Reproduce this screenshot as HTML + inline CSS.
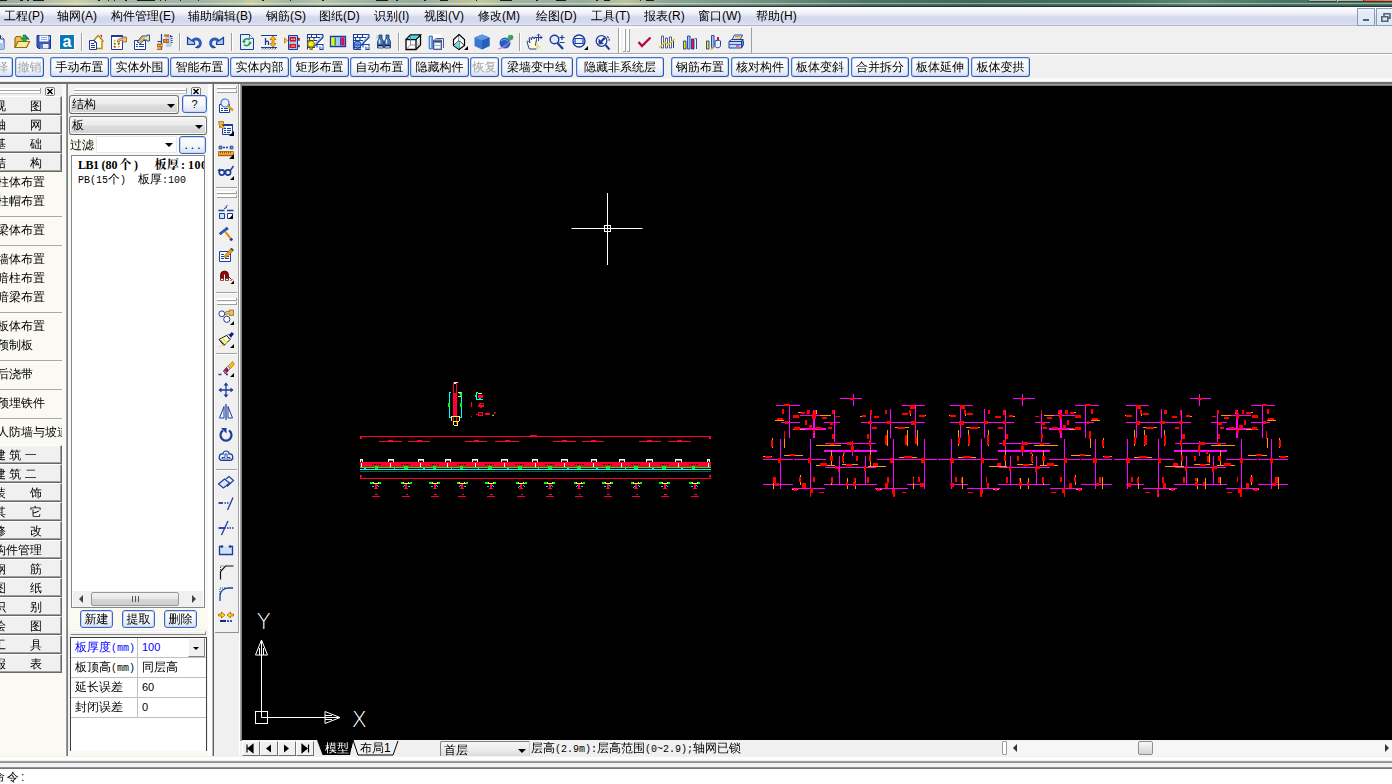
<!DOCTYPE html>
<html lang="zh-CN"><head><meta charset="utf-8"><title>CAD</title>
<style>
*{box-sizing:border-box;margin:0;padding:0}
html,body{width:1392px;height:784px;overflow:hidden;background:#f0f0f0}
body{position:relative;font-family:"Liberation Sans","WenQuanYi Zen Hei","Noto Sans CJK SC",sans-serif;font-size:12px;color:#000;line-height:1}
.a{position:absolute}
svg{position:absolute;overflow:visible}
#title{left:0;top:0;width:1392px;height:7px;background:linear-gradient(90deg,#9aa89c 0,#b0b8a8 3%,#cfd0a8 5.500%,#a8b8a4 8%,#a0b2a2 14%,#b4c0a4 17%,#c8cca0 18%,#a4b4a4 21%,#b4c4a8 23%,#9cb0a0 27%,#98ac9c 30%,#c4c89c 34.500%,#a0b4a0 37%,#98ac9c 42%,#bcc49c 45%,#8ca494 48%,#7c9888 52%,#6c8c7c 56%,#4c7466 62%,#3f695c 70%,#42705f 80%,#5c8874 86%,#4a7666 92%,#44705f 100%);border-bottom:1px solid #25352f}
#menubar{left:0;top:7px;width:1392px;height:19px;background:linear-gradient(180deg,#fdfdfe 0,#f3f4fa 30%,#e6e8f4 45%,#d6daee 55%,#d4d8ee 80%,#dfe2f2 100%);border-bottom:1px solid #b4bace}
#menubar span{position:absolute;top:3px;font-size:12px;white-space:nowrap;letter-spacing:0}
.xb{position:absolute;top:57px;height:20px;border:1px solid #3b68c0;border-color:#4674cc #2c58b4 #2c58b4 #4674cc;border-radius:3px;background:linear-gradient(180deg,#ffffff 0,#f6f8fc 50%,#e3e9f6 85%,#d3ddf2 100%);font-size:12px;line-height:18px;text-align:center;white-space:nowrap;overflow:hidden;box-shadow:inset 0 0 0 1px #c9d7f2}
.xb.dis{color:#a6a6a6}
.sep{position:absolute;width:2px;height:18px;top:33px;border-left:1px solid #a0a0a0;border-right:1px solid #fff}
#canvas{left:242px;top:86px;width:1150px;height:655px;background:#000}
.pb{position:absolute;left:-1px;width:63px;height:19px;background:#f0f0f0;border-top:1px solid #fff;border-left:1px solid #fff;border-right:1px solid #696969;border-bottom:1px solid #696969;box-shadow:inset -1px -1px 0 #a0a0a0;font-size:12px;line-height:15px;white-space:pre}
.pb span{position:absolute;top:2px}
.li{position:absolute;left:-3px;font-size:12px;white-space:nowrap}
.hs{position:absolute;left:0;width:62px;height:1px;background:#a8a8a8}
.n{font-size:11px}
.grip{position:absolute;height:6px}
.grip:before{content:"";position:absolute;left:0;right:0;top:0;height:2px;background:#fff;border-bottom:1px solid #a0a0a0;border-right:1px solid #a0a0a0}
.grip:after{content:"";position:absolute;left:0;right:0;top:3px;height:2px;background:#fff;border-bottom:1px solid #c8c8c8;border-right:1px solid #a0a0a0}
.cx{position:absolute;width:10px;height:9px;border:1px solid #808080;border-radius:2px;background:#fff}
.dd{position:absolute;height:19px;border:1px solid #787878;border-bottom-color:#606060;border-radius:3px;background:linear-gradient(180deg,#f4f4f4 0,#ececec 45%,#dcdcdc 55%,#d2d2d2 100%);font-size:12px;line-height:17px;padding-left:2px;box-shadow:inset 0 0 0 1px #fafafa}
.arr{position:absolute;width:0;height:0;border-left:4px solid transparent;border-right:4px solid transparent;border-top:4px solid #000}
.bb{position:absolute;border:1px solid #3b68c0;border-radius:3px;background:linear-gradient(180deg,#ffffff 0,#f4f7fc 50%,#dfe7f6 90%,#cfdaf0 100%);box-shadow:inset 0 0 0 1px #c9d7f2;font-size:12px;text-align:center;white-space:nowrap}
.m{font-family:'Liberation Mono',monospace;font-size:10px}
.vg{position:absolute;width:20px;height:3px;background:#fff;border-right:1px solid #a0a0a0;border-bottom:1px solid #a0a0a0}
.pg{position:absolute;font-size:12px;white-space:nowrap}
</style></head><body>
<div id="title" class="a"></div>
<div class="a" style="left:0;top:3px;width:1392px;height:1px;background:rgba(255,255,255,.45)"></div>
<div class="a" style="left:0;top:5px;width:1392px;height:1px;background:rgba(40,70,60,.35)"></div>
<div class="a" style="left:0px;top:0;width:7px;height:1px;background:#182018"></div>
<div class="a" style="left:20px;top:0;width:3px;height:1px;background:#182018"></div>
<div class="a" style="left:27px;top:0;width:2px;height:1px;background:#182018"></div>
<div class="a" style="left:33px;top:0;width:11px;height:1px;background:#182018"></div>
<div class="a" style="left:98px;top:0;width:2px;height:1px;background:#182018"></div>
<div class="a" style="left:108px;top:0;width:1px;height:1px;background:#182018"></div>
<div class="a" style="left:114px;top:0;width:1px;height:1px;background:#182018"></div>
<div class="a" style="left:125px;top:0;width:2px;height:1px;background:#182018"></div>
<div class="a" style="left:137px;top:0;width:18px;height:1px;background:#182018"></div>
<div class="a" style="left:160px;top:0;width:1px;height:1px;background:#182018"></div>
<div class="a" style="left:165px;top:0;width:1px;height:1px;background:#182018"></div>
<div class="a" style="left:180px;top:0;width:1px;height:1px;background:#182018"></div>
<div class="a" style="left:198px;top:0;width:1px;height:1px;background:#182018"></div>
<div class="a" style="left:262px;top:0;width:2px;height:1px;background:#182018"></div>
<div class="a" style="left:290px;top:0;width:1px;height:1px;background:#182018"></div>
<div class="a" style="left:322px;top:0;width:2px;height:1px;background:#182018"></div>
<div class="a" style="left:376px;top:0;width:12px;height:1px;background:#182018"></div>
<div class="a" style="left:396px;top:0;width:2px;height:1px;background:#182018"></div>
<div class="a" style="left:424px;top:0;width:2px;height:1px;background:#182018"></div>
<div class="a" style="left:440px;top:0;width:8px;height:1px;background:#182018"></div>
<div class="a" style="left:476px;top:0;width:1px;height:1px;background:#182018"></div>
<div class="a" style="left:500px;top:0;width:12px;height:1px;background:#182018"></div>
<div class="a" style="left:536px;top:0;width:2px;height:1px;background:#182018"></div>
<div class="a" style="left:556px;top:0;width:10px;height:1px;background:#182018"></div>
<div class="a" style="left:596px;top:0;width:2px;height:1px;background:#182018"></div>
<div class="a" style="left:604px;top:0;width:6px;height:1px;background:#182018"></div>
<div class="a" style="left:640px;top:0;width:1px;height:1px;background:#182018"></div>
<div class="a" style="left:646px;top:0;width:8px;height:1px;background:#182018"></div>
<div class="a" style="left:1308px;top:0;width:28px;height:2px;background:#a8bcb4;border-bottom:1px solid #30443c;border-left:1px solid #30443c;border-radius:0 0 0 4px"></div>
<div class="a" style="left:1337px;top:0;width:26px;height:2px;background:#a8bcb4;border-bottom:1px solid #30443c;border-left:1px solid #dfe8e4"></div>
<div class="a" style="left:1363px;top:0;width:29px;height:2px;background:linear-gradient(90deg,#c86848,#e08a60);border-bottom:1px solid #6a2818;border-left:1px solid #6a2818"></div>
<div id="menubar" class="a">
<span style="left:4px">工程(P)</span>
<span style="left:57px">轴网(A)</span>
<span style="left:111px">构件管理(E)</span>
<span style="left:188px">辅助编辑(B)</span>
<span style="left:266px">钢筋(S)</span>
<span style="left:319px">图纸(D)</span>
<span style="left:374px">识别(I)</span>
<span style="left:424px">视图(V)</span>
<span style="left:478px">修改(M)</span>
<span style="left:536px">绘图(D)</span>
<span style="left:591px">工具(T)</span>
<span style="left:644px">报表(R)</span>
<span style="left:698px">窗口(W)</span>
<span style="left:756px">帮助(H)</span>
<div class="a" style="left:1357px;top:1px;width:18px;height:18px;border:1px solid #8a9cb4;background:linear-gradient(180deg,#eef4fc 0,#e2ecf8 25%,#dce8f6 100%)"><div class="a" style="left:5px;top:10px;width:6px;height:2px;background:#566474"></div></div>
<div class="a" style="left:1376px;top:1px;width:18px;height:18px;border:1px solid #8a9cb4;background:linear-gradient(180deg,#eef4fc 0,#e2ecf8 25%,#dce8f6 100%)"><svg style="left:4px;top:4px" width="10" height="9" viewBox="0 0 10 9"><path d="M3 3V.8h6v4.500h-2" fill="none" stroke="#566474" stroke-width="1.600"/><path d="M.8 3.800h6v4.400h-6z" fill="none" stroke="#566474" stroke-width="1.600"/></svg></div>
</div>
<div class="a" style="left:0;top:26px;width:1392px;height:28px;background:#f0f0f0;border-bottom:1px solid #a8a8a8"></div>
<div class="a" style="left:0;top:54px;width:1392px;height:1px;background:#fff"></div>
<div class="sep" style="left:81px"></div>
<div class="sep" style="left:179px"></div>
<div class="sep" style="left:231px"></div>
<div class="sep" style="left:398px"></div>
<div class="sep" style="left:519px"></div>
<svg style="left:-10px;top:34px" width="16" height="16" viewBox="0 0 16 16"><path d="M3.500 1.500h7l3.500 3.500v10h-10.500z" fill="#eef4ff" stroke="#1c3c9c"/><path d="M10.500 1.500v3.500h3.500" fill="#fff" stroke="#1c3c9c"/><path d="M9 9h5v6h-5z" fill="#a8c8f0"/></svg>
<svg style="left:14px;top:34px" width="16" height="16" viewBox="0 0 16 16"><path d="M1 13.500v-9l1.500-2h4l1.500 2h4v2" fill="#e8c060" stroke="#a06808" stroke-width="1.200"/><path d="M1 13.500l3-6h11.500l-3 6z" fill="#f4eca0" stroke="#a06808" stroke-width="1.200"/><path d="M9 1h3v3.500h2l-3.500 3.500-3.500-3.500h2z" fill="#20b040" stroke="#107028" stroke-width=".6"/><path d="M12 2.500l3 3" stroke="#2050b0" stroke-width="1.200"/></svg>
<svg style="left:36px;top:34px" width="16" height="16" viewBox="0 0 16 16"><path d="M1 1.500h13.500v13h-12l-1.500-1.500z" fill="#3858b8" stroke="#1c3090" stroke-width="1"/><path d="M3.500 1.500h9v6h-9z" fill="#f4f8ff"/><path d="M5 3.500h6M5 5.500h6" stroke="#90b0e8"/><path d="M4 10h8.500v4.500h-8.500z" fill="#e8ecf4"/><path d="M4 10h3v4.500h-3z" fill="#5878c8"/><path d="M13.500 2.500v3" stroke="#c0d0f0"/></svg>
<svg style="left:59px;top:34px" width="16" height="16" viewBox="0 0 16 16"><rect x=".5" y=".5" width="15" height="15" fill="#0c80c0" stroke="#fff" stroke-width="1"/><rect x="1" y="1" width="14" height="14" fill="#0878b8"/><text x="8" y="13" text-anchor="middle" font-family="Liberation Sans,sans-serif" font-weight="bold" font-size="16" fill="#fff">a</text></svg>
<svg style="left:88px;top:34px" width="16" height="16" viewBox="0 0 16 16"><path d="M5 7.500l5-6 5.500 6M6.500 7v7.500h7.500v-7.500" fill="#fffbe8" stroke="#b08810" stroke-width="1.400"/><path d="M12 1h2v3z" fill="#d01050"/><path d="M1.500 6.500h5l2 2v7h-7z" fill="#fff" stroke="#1c3c9c"/><path d="M3 9.500h3M3 11.500h4M3 13.500h4" stroke="#1c3c9c"/><path d="M6.500 6.500v2h2" fill="none" stroke="#1c3c9c" stroke-width=".8"/></svg>
<svg style="left:111px;top:34px" width="16" height="16" viewBox="0 0 16 16"><path d="M.5 1.500h11v14h-11z" fill="#fff" stroke="#1c3c9c"/><path d="M.5 2h11" stroke="#1c3c9c" stroke-width="2"/><path d="M3 6l1.500 1.500" stroke="#e0c000" stroke-width="1.600"/><path d="M3 9l1.500 1.500" stroke="#10a020" stroke-width="1.600"/><path d="M3 12l1.500 1.500" stroke="#e01010" stroke-width="1.600"/><path d="M8.500 9l-1.500 1.500" stroke="#e01010" stroke-width="1.600"/><path d="M8.500 12l-1.500 1.500" stroke="#e0c000" stroke-width="1.600"/><path d="M7 6.500l1 1" stroke="#10a020" stroke-width="1.400"/><path d="M6.500 8c0-4 3-4 5-3.500v-1.500h4v5h-4v-1.500c-2-.5-3 0-3 1.500z" fill="#e8c080" stroke="#906020" stroke-width=".8"/></svg>
<svg style="left:134px;top:34px" width="16" height="16" viewBox="0 0 16 16"><path d="M.5 6.500h11v9h-11z" fill="#fff" stroke="#1c3c9c"/><path d="M2 10.500h2M5 10.500h5M2 12.500h2M5 12.500h5" stroke="#1c3c9c" stroke-width="1.200"/><path d="M3 8l5-6h5v-1h2.500v6h-2.500v-1h-3l-3 3.500z" fill="#f0e890" stroke="#1c3c9c" stroke-width=".9"/><path d="M4.500 7.500l4-4.500M6 8l4-4.500M7.500 8l3-3.500" stroke="#806010" stroke-width=".6"/></svg>
<svg style="left:157px;top:34px" width="16" height="16" viewBox="0 0 16 16"><path d="M4.500 0v16M4.500 7.500h-4M11 2v11M13.500 1v12" stroke="#1c3c9c" stroke-width="1.200" fill="none"/><path d="M8 3h6v10h-5z" fill="#b8d0f0"/><path d="M7 .500h5v2h-5z" fill="#c06810"/><path d="M6 5h6v4h-6z" fill="#c06810"/><path d="M0 9.500h5.500v4h-5.500z" fill="#c06810"/><path d="M0 14.500h5v1.500h-5z" fill="#c06810"/><path d="M7.500 6.500h1.500v1h-1.500zM10 6.500h1.500v1h-1.500zM1 11h1.500v1h-1.500zM3.500 11h1.500v1h-1.500z" fill="#ffe060"/><path d="M14 2.500h1.500M14 4.500h1.500M14 6.500h1.500M14 8.500h1.500" stroke="#1c3c9c"/></svg>
<svg style="left:186px;top:34px" width="16" height="16" viewBox="0 0 16 16"><path d="M6 9.500A4.200 4.200 0 1 1 11.200 13.300" fill="none" stroke="#2a5cc0" stroke-width="3"/><path d="M9.500 13.600l2.500-.800" stroke="#101850" stroke-width="1.200"/><path d="M1.500 3.500v7h7v-2.500l-3.500-2z" fill="#a8c8f0" stroke="#1c3c9c" stroke-width="1.200" stroke-linejoin="miter"/></svg>
<svg style="left:209px;top:34px" width="16" height="16" viewBox="0 0 16 16"><path d="M10 9.500A4.200 4.200 0 1 0 4.800 13.300" fill="none" stroke="#2a5cc0" stroke-width="3"/><path d="M6.500 13.600l-2.500-.800" stroke="#101850" stroke-width="1.200"/><path d="M14.500 3.500v7h-7v-2.500l3.500-2z" fill="#a8c8f0" stroke="#1c3c9c" stroke-width="1.200" stroke-linejoin="miter"/></svg>
<svg style="left:239px;top:34px" width="16" height="16" viewBox="0 0 16 16"><path d="M1.500 .500h9l4 4v11h-13z" fill="#e4eefc" stroke="#1c3c9c"/><path d="M10.500 .500v4h4" fill="#fff" stroke="#1c3c9c" stroke-width=".8"/><path d="M10.500 6a3.500 3.500 0 0 0-6 1.500" fill="none" stroke="#20a030" stroke-width="1.600"/><path d="M5 10.500a3.500 3.500 0 0 0 6-1.500" fill="none" stroke="#20a030" stroke-width="1.600"/><path d="M3 7h4l-2 2.500zM13 9.500h-4l2-2.500z" fill="#20a030"/></svg>
<svg style="left:261px;top:34px" width="16" height="16" viewBox="0 0 16 16"><path d="M0 1.500h16M0 13.500h16" stroke="#1c3c9c" stroke-width="1.200"/><path d="M1 15.500l1.500-1.500M3.500 15.500l1.500-1.500M6 15.500l1.500-1.500M8.500 15.500l1.500-1.500M11 15.500l1.500-1.500M13.500 15.500l1.500-1.500" stroke="#1c3c9c" stroke-width=".9"/><path d="M4.500 4v7M4.500 8c2-1.500 3-1 3 .500v2.500" fill="none" stroke="#1c3c9c" stroke-width="1.300"/><path d="M12 2l3 3.500h-2v4h2l-3 3.500-3-3.500h2v-4h-2z" fill="#f8c020" stroke="#b07000" stroke-width=".8"/></svg>
<svg style="left:284px;top:34px" width="16" height="16" viewBox="0 0 16 16"><path d="M4.500 1.500h9v14h-9z" fill="#a8c4f0" stroke="#1c3c9c"/><path d="M.500 4l3 2.500-3 2.500z" fill="#ffd860" stroke="#c08000" stroke-width=".9"/><path d="M5.500 3h6.500v4.500h-6.500zM5.500 10h6.500v4h-6.500z" fill="#d01030"/><path d="M7 4.500h1.500v1.500h-1.500zM9.500 4.500h1.500v1.500h-1.500zM7 11.500h4v1h-4z" fill="#ffe060"/><path d="M13.500 4h2v2.500h-2zM13.500 11h2v2h-2z" fill="#d01030" stroke="#1c3c9c" stroke-width=".5"/></svg>
<svg style="left:307px;top:34px" width="16" height="16" viewBox="0 0 16 16"><rect x=".5" y=".5" width="15" height="14.500" fill="#fff"/><path d="M16 0L7.500 9.500h3L16 4z" fill="#a8c8f0"/><path d="M10 9.500h6V5z" fill="#fff"/><path d="M.500 15.500V.500h15.500M.500 3.500h12.500M.500 6.500h9.500M.500 9.500h7M4.500 .500v3M9.500 .500v3M2.500 3.500v3M7 3.500v3M4.500 6.500v3M8.500 10.500h7.500v2M10 10.500v3M8 13.500h-7.500M13 12.500v3h3v-2.500M5 12v3.500M16 .500v3l-9 9" fill="none" stroke="#1c3c9c" stroke-width="1.100"/><path d="M13.500 13h2v2h-2z" fill="#a8c8f0"/><circle cx="4" cy="10" r="3.300" fill="#f8f010" stroke="#605000" stroke-width=".8"/><path d="M2.800 13h2.400v2.500h-2.400z" fill="#c8a000" stroke="#705000" stroke-width=".6"/><path d="M.500 5l1 1.500M4 3.500v2M7.500 5l-1 1.500" stroke="#ffe020" stroke-width=".9"/></svg>
<svg style="left:330px;top:34px" width="16" height="16" viewBox="0 0 16 16"><path d="M.500 2.500h15v10h-15z" fill="#a8c8f0" stroke="#1c3c9c" stroke-width="1.300"/><path d="M1.500 3.500h3v8h-3z" fill="#f8f000"/><path d="M4.500 3.500h1.500v8h-1.500z" fill="#30a830"/><path d="M6 3.500h4v8h-4z" fill="#a8c8f0"/><path d="M10 3.500h1.200v8h-1.200z" fill="#1848d0"/><path d="M11.200 3.500h3.300v8h-3.300z" fill="#d81048"/></svg>
<svg style="left:353px;top:34px" width="16" height="16" viewBox="0 0 16 16"><rect x=".5" y=".5" width="15" height="14.500" fill="#fff"/><path d="M16 0L7.500 9.500h3L16 4z" fill="#a8c8f0"/><path d="M10 9.500h6V5z" fill="#fff"/><path d="M.500 15.500V.500h15.500M.500 3.500h12.500M.500 6.500h9.500M.500 9.500h7M4.500 .500v3M9.500 .500v3M2.500 3.500v3M7 3.500v3M4.500 6.500v3M8.500 10.500h7.500v2M10 10.500v3M8 13.500h-7.500M13 12.500v3h3v-2.500M5 12v3.500M16 .500v3l-9 9" fill="none" stroke="#1c3c9c" stroke-width="1.100"/><path d="M13.500 13h2v2h-2z" fill="#a8c8f0"/><circle cx="4.500" cy="10.500" r="3.400" fill="#3a78d0" stroke="#1c3c9c" stroke-width=".8"/><path d="M2 9.500c1.500-1 3-1 5 0M2 12c1.500 1 3 1 5 0" stroke="#a8d0f8" stroke-width=".7" fill="none"/><path d="M1 14.500h7v1.500h-7z" fill="#1c3c9c"/></svg>
<svg style="left:376px;top:34px" width="16" height="16" viewBox="0 0 16 16"><path d="M0 1h3v4h-3z" fill="#c8e4c8"/><path d="M3 1h3v3.500l1.500 3v6.500h-6v-6.500l1.500-3z" fill="#4878b0" stroke="#1c3070" stroke-width=".8"/><path d="M10 1h3v3.500l1.500 3v6.500h-6v-6.500l1.500-3z" fill="#4878b0" stroke="#1c3070" stroke-width=".8"/><path d="M3.500 5.500v4M10.500 5.500v4" stroke="#d8ecfc" stroke-width="1.400"/><path d="M2 11.500h5M9 11.500h5" stroke="#102040" stroke-width="1.600"/><path d="M2.500 13h4M9.500 13h4" stroke="#e8f4ff" stroke-width="1"/><path d="M7.500 7.500h1" stroke="#1c3070" stroke-width="2"/></svg>
<svg style="left:405px;top:34px" width="16" height="16" viewBox="0 0 16 16"><path d="M1 5.500h10v10h-10zM1 5.500l4.500-4.500h10l-4.500 4.500M15.500 1v10l-4.500 4.500" fill="#fff" stroke="#000" stroke-width="1.300"/><path d="M2 5l3.800-3.500h8.500l-3.800 3.500z" fill="#40e0e8"/><path d="M1.500 15l4-4M5.500 1.500v9.500h9.500" stroke="#707070" stroke-width=".8" fill="none"/><path d="M11.500 10.500l3.500-3.500v3.500z" fill="#d0d0d0"/></svg>
<svg style="left:428px;top:34px" width="16" height="16" viewBox="0 0 16 16"><rect x="0" y="0" width="13" height="16" fill="#fff"/><path d="M1 2h3.500v13h-3.500z" fill="#68a0e0" stroke="#3870c0" stroke-width=".8"/><path d="M2.500 3v11" stroke="#c8e0f8"/><path d="M5.500 6h8v9.500h-8z" fill="#8890c8" stroke="#404890" stroke-width=".9"/><path d="M7.500 4.500h8v9.500" fill="none" stroke="#404890" stroke-width=".9"/><path d="M6.500 9h6v5.500h-6z" fill="#f0f4f8"/><path d="M6.500 11.500h6" stroke="#90c890"/><path d="M6 7.500h7.500" stroke="#404890" stroke-width="1.200"/></svg>
<svg style="left:452px;top:34px" width="16" height="16" viewBox="0 0 16 16"><path d="M7 .500l5.500 5v6l-5.500 4-5.500-4v-6z" fill="#fff" stroke="#000" stroke-width="1.200"/><path d="M7 .500v6l-5.500 5M7 6.500l5.500 5M7 6.500v9" fill="none" stroke="#000" stroke-width=".8"/><path d="M2 11.500l5 3.500v-8z" fill="#60e0e8"/><path d="M7 1.500l4.500 4.500-4.500 1z" fill="#d8f4f8"/><path d="M16 12v4h-4z" fill="#000"/></svg>
<svg style="left:474px;top:34px" width="16" height="16" viewBox="0 0 16 16"><path d="M8 .500l7.500 3v8.500l-7.500 3.500-7.500-3.500v-8.500z" fill="#3a78d0"/><path d="M8 .500l7.500 3-7.500 3-7.500-3z" fill="#5a98e8"/><path d="M8 6.500v9l7.500-3.500v-8.500z" fill="#2860b8"/></svg>
<svg style="left:498px;top:34px" width="16" height="16" viewBox="0 0 16 16"><circle cx="7" cy="9" r="5.500" fill="#2860c0"/><path d="M3 7c2-2 5-2 7 0" stroke="#5a98e8" stroke-width="1.500" fill="none"/><circle cx="12.500" cy="3.500" r="2.800" fill="#20c040"/><path d="M.500 15c4-1 10-5 14-13" fill="none" stroke="#9048b0" stroke-width="1.200"/><path d="M1 14.500c5-1 9-4 12-9" fill="none" stroke="#d8c8e8" stroke-width=".7"/></svg>
<svg style="left:526px;top:34px" width="16" height="16" viewBox="0 0 16 16"><path d="M1 7.500c1-1 2 0 3 1.500l-1-5c1-1 2 0 2.500 2l.500-3c1-.500 1.800 0 2 2l1-2c1 0 1.500 1 1.500 2.500l-1 5.500 1.500 2v2h-7.500l-1-2z" fill="#fffbe0" stroke="#1c3c9c" stroke-width="1"/><path d="M12.500 0v7M9 3.500h7M12.500 0l-1.500 1.500M12.500 0l1.500 1.500M16 3.500l-1.500-1.500M16 3.500l-1.500 1.500" stroke="#1c3c9c" stroke-width="1" fill="none"/><path d="M10 9l5 4-5 3z" fill="#e8e090"/></svg>
<svg style="left:549px;top:34px" width="16" height="16" viewBox="0 0 16 16"><circle cx="5.500" cy="5.500" r="4.300" fill="#e0ecfc" stroke="#1c3c9c" stroke-width="1.400"/><path d="M8.500 9l5.500 6" stroke="#1c3c9c" stroke-width="2.200"/><path d="M10.500 3.500h5M13 1v5M10.500 8.500h5" stroke="#1c3c9c" stroke-width="1.200"/></svg>
<svg style="left:572px;top:34px" width="16" height="16" viewBox="0 0 16 16"><circle cx="7" cy="7" r="6" fill="#fff" stroke="#1c3c9c" stroke-width="1.400"/><path d="M3 4.500h8v5h-8z" fill="#e0ecfc" stroke="#1c3c9c" stroke-width="1.200"/><path d="M3 9.500v-2M11 4.500v2" stroke="#fff" stroke-width="0"/><path d="M16 12v4h-4z" fill="#000"/></svg>
<svg style="left:595px;top:34px" width="16" height="16" viewBox="0 0 16 16"><circle cx="6.500" cy="7" r="5.300" fill="#fff" stroke="#1c3c9c" stroke-width="1.300"/><path d="M10.500 11l4 4.500" stroke="#1c3c9c" stroke-width="2"/><path d="M3.500 10.500v-6l2 2 3.500-3.500 1.500 2-3.500 3 2 2z" fill="#1c3c9c"/><path d="M12 2.500c2 1 2.500 3 2 5" fill="none" stroke="#1c3c9c" stroke-width="1.200" stroke-dasharray="2 1"/></svg>
<svg style="left:636px;top:34px" width="16" height="16" viewBox="0 0 16 16"><path d="M2.500 8l3.500 4 8.500-8.500" fill="none" stroke="#b80838" stroke-width="2.300" stroke-linejoin="miter"/></svg>
<svg style="left:659px;top:34px" width="16" height="16" viewBox="0 0 16 16"><path d="M2.500 2v12h2v-12zM6.500 4v10h2v-10zM10.500 3v11h2v-11z" fill="#fff" stroke="#283080" stroke-width=".8"/><path d="M14.500 5v9" stroke="#1c3c9c"/><path d="M0 14l6-6 3 3 6.500-6" fill="none" stroke="#e8d000" stroke-width="1.200"/></svg>
<svg style="left:682px;top:34px" width="16" height="16" viewBox="0 0 16 16"><path d="M1.500 7h2.500v8h-2.500z" fill="#f8e000" stroke="#1c3c9c" stroke-width=".9"/><path d="M5.500 2h2.500v13h-2.500z" fill="#a8c8f0" stroke="#1c3c9c" stroke-width=".9"/><path d="M9.500 5h2.500v10h-2.500z" fill="#e01030" stroke="#1c3c9c" stroke-width=".9"/><path d="M13 4.500h1.500v10.500" fill="none" stroke="#1c3c9c" stroke-width=".9"/></svg>
<svg style="left:705px;top:34px" width="16" height="16" viewBox="0 0 16 16"><path d="M1.500 7h2.500v8h-2.500z" fill="#f8e000" stroke="#1c3c9c" stroke-width=".9"/><path d="M6.500 1.500h2.500v12h-2.500z" fill="#a8c8f0" stroke="#1c3c9c" stroke-width=".9"/><path d="M12 3h2v4h-2z" fill="#e01030"/><path d="M10 7c0-1 5.500-1 5.500 0v4.500c0 3-5.500 3-5.500 0z" fill="#e8f0fc" stroke="#1c3c9c" stroke-width="1"/><path d="M9 13l-3 2.500" stroke="#e0a020" stroke-width="1.600"/></svg>
<svg style="left:728px;top:34px" width="16" height="16" viewBox="0 0 16 16"><path d="M4 6l2.500-5h8l-2.500 5z" fill="#fff" stroke="#1c3c9c" stroke-width="1"/><path d="M7 2.500h5.500M6.500 4h5.500" stroke="#d8a020" stroke-width="1"/><path d="M1 7.500l2.500-2h11.500l-1.500 2zM1 7.500h12.500v6.500h-12.500zM13.500 7.500l1.500-2v6l-1.500 2.500" fill="#c8daf4" stroke="#1c3c9c" stroke-width="1"/><path d="M1.500 10.500h11.500" stroke="#1c3c9c" stroke-width=".8"/><path d="M8 12h3.500" stroke="#e01060" stroke-width="1.200"/><path d="M14.500 6.500c1.500 1 1.500 4 0 5.500" fill="none" stroke="#1c3c9c"/></svg>
<div class="a" style="left:618px;top:28px;width:2px;height:25px;border-left:1px solid #a0a0a0;border-right:1px solid #fff"></div>
<div class="a" style="left:620px;top:27px;width:132px;height:26px;border-left:1px solid #fff;border-right:1px solid #a0a0a0;border-top:1px solid #fff"></div>
<div class="a" style="left:623px;top:29px;width:3px;height:23px;background:#fff;border-right:1px solid #a0a0a0;border-bottom:1px solid #a0a0a0"></div>
<div class="a" style="left:627px;top:29px;width:3px;height:23px;background:#fff;border-right:1px solid #a0a0a0;border-bottom:1px solid #a0a0a0"></div>
<div class="xb dis" style="left:-9px;width:22px">择</div>
<div class="xb dis" style="left:15px;width:29px">撤销</div>
<div class="xb" style="left:50px;width:59px">手动布置</div>
<div class="xb" style="left:110px;width:59px">实体外围</div>
<div class="xb" style="left:170px;width:59px">智能布置</div>
<div class="xb" style="left:230px;width:59px">实体内部</div>
<div class="xb" style="left:290px;width:59px">矩形布置</div>
<div class="xb" style="left:350px;width:59px">自动布置</div>
<div class="xb" style="left:410px;width:59px">隐藏构件</div>
<div class="xb dis" style="left:470px;width:29px">恢复</div>
<div class="xb" style="left:501px;width:72px">梁墙变中线</div>
<div class="xb" style="left:576px;width:88px">隐藏非系统层</div>
<div class="xb" style="left:671px;width:58px">钢筋布置</div>
<div class="xb" style="left:731px;width:58px">核对构件</div>
<div class="xb" style="left:791px;width:58px">板体变斜</div>
<div class="xb" style="left:851px;width:58px">合并拆分</div>
<div class="xb" style="left:911px;width:58px">板体延伸</div>
<div class="xb" style="left:971px;width:59px">板体变拱</div>
<div class="a" style="left:0;top:78px;width:1392px;height:4px;background:linear-gradient(180deg,#f4f4f4,#fff 60%,#e0e0e0)"></div>
<div class="a" style="left:0;top:82px;width:1392px;height:2px;background:#6e6e6e"></div>
<div id="canvas" class="a"></div>
<div class="a" style="left:0;top:84px;width:62px;height:672px;background:#f0f0f0;overflow:hidden">
<div class="grip" style="left:-2px;top:4px;width:43px"></div>
<div class="cx" style="left:45px;top:3px"><svg style="left:1px;top:1px" width="6" height="5" viewBox="0 0 6 5"><path d="M0.5 0 L5.5 5 M5.5 0 L0.5 5" stroke="#000" stroke-width="1.6"/></svg></div>
<div class="a" style="left:0;top:87px;width:62px;height:274px;background:#fbfaf2"></div>
<div class="a" style="left:0;top:587px;width:62px;height:90px;background:#fbfaf2"></div>
<div class="pb" style="top:12px"><span style="left:-6px">视</span><span style="left:30px">图</span></div>
<div class="pb" style="top:31px"><span style="left:-6px">轴</span><span style="left:30px">网</span></div>
<div class="pb" style="top:50px"><span style="left:-6px">基</span><span style="left:30px">础</span></div>
<div class="pb" style="top:69px"><span style="left:-6px">结</span><span style="left:30px">构</span></div>
<div class="li" style="top:92px">柱体布置</div>
<div class="li" style="top:111px">柱帽布置</div>
<div class="li" style="top:140px">梁体布置</div>
<div class="li" style="top:169px">墙体布置</div>
<div class="li" style="top:188px">暗柱布置</div>
<div class="li" style="top:207px">暗梁布置</div>
<div class="li" style="top:236px">板体布置</div>
<div class="li" style="top:255px">预制板</div>
<div class="li" style="top:284px">后浇带</div>
<div class="li" style="top:313px">预埋铁件</div>
<div class="li" style="top:342px">人防墙与坡道</div>
<div class="hs" style="top:132px"></div>
<div class="hs" style="top:161px"></div>
<div class="hs" style="top:228px"></div>
<div class="hs" style="top:276px"></div>
<div class="hs" style="top:305px"></div>
<div class="hs" style="top:334px"></div>
<div class="pb" style="top:361px"><span style="left:-6px">建 筑 一</span></div>
<div class="pb" style="top:380px"><span style="left:-6px">建 筑 二</span></div>
<div class="pb" style="top:399px"><span style="left:-6px">装</span><span style="left:30px">饰</span></div>
<div class="pb" style="top:418px"><span style="left:-6px">其</span><span style="left:30px">它</span></div>
<div class="pb" style="top:437px"><span style="left:-6px">修</span><span style="left:30px">改</span></div>
<div class="pb" style="top:456px"><span style="left:-6px">构件管理</span></div>
<div class="pb" style="top:475px"><span style="left:-6px">钢</span><span style="left:30px">筋</span></div>
<div class="pb" style="top:494px"><span style="left:-6px">图</span><span style="left:30px">纸</span></div>
<div class="pb" style="top:513px"><span style="left:-6px">识</span><span style="left:30px">别</span></div>
<div class="pb" style="top:532px"><span style="left:-6px">绘</span><span style="left:30px">图</span></div>
<div class="pb" style="top:551px"><span style="left:-6px">工</span><span style="left:30px">具</span></div>
<div class="pb" style="top:570px"><span style="left:-6px">报</span><span style="left:30px">表</span></div>
</div>
<div class="a" style="left:62px;top:84px;width:6px;height:672px;background:#fafafa"><div class="a" style="left:4px;top:0;width:2px;height:672px;background:linear-gradient(90deg,#b0b0b0 0,#808080 50%)"></div></div>
<div class="a" style="left:68px;top:84px;width:144px;height:672px;background:#f0f0f0;overflow:hidden">
<div class="grip" style="left:6px;top:4px;width:113px"></div>
<div class="cx" style="left:123px;top:3px"><svg style="left:1px;top:1px" width="6" height="5" viewBox="0 0 6 5"><path d="M0.5 0 L5.5 5 M5.5 0 L0.5 5" stroke="#000" stroke-width="1.6"/></svg></div>
<div class="dd" style="left:1px;top:11px;width:110px">结构<div class="arr" style="left:97px;top:8px"></div></div>
<div class="bb" style="left:114px;top:11px;width:25px;height:18px;line-height:16px;font-size:11px">?</div>
<div class="dd" style="left:1px;top:32px;width:138px">板<div class="arr" style="left:125px;top:8px"></div></div>
<div class="a" style="left:0;top:51px;width:142px;height:20px;background:#fbfaf2"></div>
<div class="a" style="left:2px;top:55px;font-size:12px">过滤</div>
<div class="a" style="left:28px;top:52px;width:81px;height:17px;background:#fff;border:1px solid #e4e8f4"><div class="arr" style="left:68px;top:6px"></div></div>
<div class="bb" style="left:111px;top:52px;width:27px;height:18px;line-height:16px;letter-spacing:3px;padding-left:3px">...</div>
<div class="a" style="left:0;top:71px;width:142px;height:475px;background:#fbfaf2"></div>
<div class="a" style="left:3px;top:71px;width:134px;height:453px;background:#fff;border:1px solid #828790;overflow:hidden">
<div class="a" style="left:0;top:3px;width:140px;height:14px;font-family:'Liberation Serif','Noto Serif CJK SC',serif;font-weight:bold;font-size:12px;white-space:pre"><span class="a" style="left:6px;letter-spacing:-.5px">LB1</span><span class="a" style="left:29.500px">(80</span><span class="a" style="left:47.500px">个</span><span class="a" style="left:62px">)</span><span class="a" style="left:82.500px;letter-spacing:.5px">板厚</span><span class="a" style="left:109px">:</span><span class="a" style="left:116px;letter-spacing:.5px">100</span></div>
<div class="a" style="left:6px;top:17px;font-size:12px;white-space:pre"><span class="m">PB(15</span>个<span class="m">)  </span>板厚<span class="m">:100</span></div>
<div class="a" style="left:1px;top:435px;width:130px;height:16px;background:#f0f0f0"></div>
<svg style="left:6px;top:439px" width="6" height="8"><path d="M5 0 L1 4 L5 8Z" fill="#444"/></svg>
<svg style="left:119px;top:439px" width="6" height="8"><path d="M1 0 L5 4 L1 8Z" fill="#444"/></svg>
<div class="a" style="left:19px;top:436px;width:88px;height:14px;border:1px solid #979797;border-radius:2px;background:linear-gradient(180deg,#f2f2f2 0,#e8e8e8 45%,#d4d4d4 55%,#cfcfcf 100%)"><div class="a" style="left:40px;top:3px;width:7px;height:6px;border-left:1px solid #555;border-right:1px solid #555"><div class="a" style="left:2px;top:0;width:1px;height:6px;background:#555"></div></div></div>
</div>
<div class="bb" style="left:12px;top:526px;width:33px;height:18px;line-height:16px">新建</div>
<div class="bb" style="left:54px;top:526px;width:33px;height:18px;line-height:16px">提取</div>
<div class="bb" style="left:96px;top:526px;width:33px;height:18px;line-height:16px">删除</div>
<div class="a" style="left:2px;top:547px;width:136px;height:4px;border-top:1px solid #fff;border-left:1px solid #fff;border-right:1px solid #888;border-bottom:1px solid #888;background:#f0f0f0"></div>
<div class="a" style="left:2px;top:553px;width:137px;height:114px;background:#fff;border:1px solid #404040;border-bottom:none;overflow:hidden">
<div class="pg" style="left:4px;top:3px;color:#0000ff">板厚度<span class="m">(mm)</span></div>
<div class="pg" style="left:71px;top:3px;color:#0000ff"><span class="n">100</span></div>
<div class="a" style="left:0;top:19px;width:135px;height:1px;background:#c0c0c0"></div>
<div class="pg" style="left:4px;top:23px;color:#000">板顶高<span class="m">(mm)</span></div>
<div class="pg" style="left:71px;top:23px;color:#000">同层高</div>
<div class="a" style="left:0;top:39px;width:135px;height:1px;background:#c0c0c0"></div>
<div class="pg" style="left:4px;top:43px;color:#000">延长误差</div>
<div class="pg" style="left:71px;top:43px;color:#000"><span class="n">60</span></div>
<div class="a" style="left:0;top:59px;width:135px;height:1px;background:#c0c0c0"></div>
<div class="pg" style="left:4px;top:63px;color:#000">封闭误差</div>
<div class="pg" style="left:71px;top:63px;color:#000"><span class="n">0</span></div>
<div class="a" style="left:0;top:79px;width:135px;height:1px;background:#c0c0c0"></div>
<div class="a" style="left:66px;top:0;width:1px;height:80px;background:#c0c0c0"></div>
<div class="a" style="left:117px;top:0;width:17px;height:19px;background:#f0f0f0;border-top:1px solid #fff;border-left:1px solid #fff;border-right:1px solid #808080;border-bottom:1px solid #808080"><div class="arr" style="left:4px;top:8px;border-left-width:3px;border-right-width:3px;border-top-width:3px"></div></div>
</div>
<div class="a" style="left:0;top:667px;width:144px;height:5px;background:#fbfaf2"></div>
</div>
<div class="a" style="left:208px;top:84px;width:34px;height:672px;background:#f0f0f0"></div>
<div class="a" style="left:208px;top:84px;width:4px;height:672px;background:#fff"></div>
<div class="a" style="left:212px;top:84px;width:2px;height:672px;background:linear-gradient(90deg,#b8b8b8 0,#b8b8b8 50%,#606060 50%)"></div>
<div class="a" style="left:214px;top:84px;width:1px;height:672px;background:#fff"></div>
<div class="a" style="left:238px;top:84px;width:1px;height:549px;background:#a0a0a0"></div>
<div class="a" style="left:239px;top:84px;width:1px;height:672px;background:#fff"></div>
<div class="a" style="left:240px;top:84px;width:1152px;height:2px;background:linear-gradient(180deg,#a8a8a8,#707070)"></div>
<div class="a" style="left:240px;top:84px;width:2px;height:657px;background:linear-gradient(90deg,#b8b8b8,#707070)"></div>
<div class="vg" style="left:217px;top:86px"></div><div class="vg" style="left:217px;top:90px"></div>
<svg style="left:218px;top:98px" width="16" height="16" viewBox="0 0 16 16"><path d="M1.5 6.5h10v8h-10z" fill="#fff" stroke="#1c3c9c"/><path d="M3 10.5h2M6 10.5h4M3 12.5h2M6 12.5h4" stroke="#1c3c9c" stroke-width="1"/><circle cx="7" cy="5" r="4" fill="#e8f0fc" stroke="#4a6cd0" stroke-width="1.2"/><path d="M10 8l5 4.5" stroke="#d8a020" stroke-width="2.4"/></svg>
<svg style="left:218px;top:120px" width="16" height="16" viewBox="0 0 16 16"><path d="M4.5 4.5h10v10h-10z" fill="#f4f8ff" stroke="#1c3c9c"/><path d="M4.5 5h10" stroke="#1c3c9c" stroke-width="2"/><path d="M6 8.5h2M9 8.5h4M6 10.5h2M9 10.5h4M6 12.5h2M9 12.5h3" stroke="#1c3c9c"/><path d="M0.5 1.5h5v3h-2l3 3-1.5 1.5-3-3v2z" fill="#f0c040" stroke="#a07010" stroke-width=".8"/><path d="M16 11v5h-5z" fill="#000"/></svg>
<svg style="left:218px;top:143px" width="16" height="16" viewBox="0 0 16 16"><path d="M1 3h3v3h-3zM12 3h3v3h-3z" fill="#4a8ad0" stroke="#1c3c9c" stroke-width=".6"/><path d="M5 4.5h2M8 4.5h2" stroke="#1c3c9c" stroke-width="1.4"/><path d="M0.5 8.5h15v4h-15z" fill="#f0c030" stroke="#b06010" stroke-width=".8"/><path d="M2.5 8.5v2M4.5 8.5v2M6.5 8.5v2M8.5 8.5v2M10.5 8.5v2M12.5 8.5v2" stroke="#703000" stroke-width=".8"/><path d="M0 12.5h16" stroke="#c05010" stroke-width="1.4"/><path d="M16 11v5h-5z" fill="#000"/></svg>
<svg style="left:218px;top:164px" width="16" height="16" viewBox="0 0 16 16"><circle cx="3.8" cy="8.5" r="2.6" fill="none" stroke="#1c3c9c" stroke-width="1.6"/><circle cx="10" cy="8.5" r="2.6" fill="none" stroke="#1c3c9c" stroke-width="1.6"/><path d="M6 8h2M0 7l2-2M12 7l3.5-5" stroke="#1c3c9c" stroke-width="1.4" fill="none"/><path d="M16 12v4h-4z" fill="#000"/></svg>
<div class="a" style="left:216px;top:187px;width:21px;height:2px;border-top:1px solid #a0a0a0;border-bottom:1px solid #fff"></div>
<div class="vg" style="left:217px;top:191px"></div><div class="vg" style="left:217px;top:195px"></div>
<svg style="left:218px;top:205px" width="16" height="16" viewBox="0 0 16 16"><path d="M0.5 5.5h6M9 5.5h6.5" stroke="#1c3c9c" stroke-width="1.4"/><path d="M7.5 2l2-2M6 3.5l3-1" stroke="#1c3c9c"/><path d="M1.5 8.5h5v5h-5z" fill="#cfe0f8" stroke="#1c3c9c"/><path d="M9.5 8.5h5v5h-5z" fill="#fff" stroke="#1c3c9c"/><path d="M15 9.500v4.5h-4.500z" fill="#000"/></svg>
<svg style="left:218px;top:226px" width="16" height="16" viewBox="0 0 16 16"><path d="M7 5.500l6 7.500" stroke="#f0b020" stroke-width="2.200"/><path d="M8 6.500l4 5" stroke="#e04010" stroke-width=".8"/><path d="M12.500 12.500l1.500 2" stroke="#1c3c9c" stroke-width="2.800"/><path d="M1.800 8l8-6.200" stroke="#2a58b8" stroke-width="2.800"/><path d="M1.500 7l1.500 2M8.500 1.500l1.500 2" stroke="#1c3c9c" stroke-width="1"/></svg>
<svg style="left:218px;top:247px" width="16" height="16" viewBox="0 0 16 16"><path d="M1.500 4.500h11v10h-11z" fill="#fff" stroke="#1c3c9c"/><path d="M3 7.500h3M3 9.500h3M3 11.500h3M7 9.500h4M7 11.500h4" stroke="#1c3c9c"/><path d="M7 8l6.500-7 2 2-6.500 7-2.500.5z" fill="#f0a020" stroke="#905010" stroke-width=".7"/><path d="M13 1.500l2 2" stroke="#1c3c9c" stroke-width="1.600"/></svg>
<svg style="left:218px;top:268px" width="16" height="16" viewBox="0 0 16 16"><path d="M2.500 12v-5a4 4 0 0 1 8 0v5h-3v-5a1 1 0 0 0-2 0v5z" fill="#900808" stroke="#500000" stroke-width=".8"/><path d="M2.500 10.500h3v2h-3zM7.500 10.500h3v2h-3z" fill="#fff" stroke="#600808" stroke-width=".6"/><path d="M11 9l2.500 2.500M12.500 13l2-2" stroke="#b01818" stroke-width="1"/><path d="M16 12.500v3.500h-3.500z" fill="#000"/></svg>
<div class="a" style="left:216px;top:292px;width:21px;height:2px;border-top:1px solid #a0a0a0;border-bottom:1px solid #fff"></div>
<div class="vg" style="left:217px;top:298px"></div><div class="vg" style="left:217px;top:302px"></div>
<svg style="left:218px;top:309px" width="16" height="16" viewBox="0 0 16 16"><path d="M6.500 4.500c1-2.500 3-2.500 5-2v-1.500h4v5.500h-4v-1.500c-2-.500-3 0-3.500 1z" fill="#e8c060" stroke="#906818" stroke-width=".8"/><circle cx="3.800" cy="4.800" r="2.900" fill="#fff" stroke="#2a3c9c" stroke-width="1"/><circle cx="8.800" cy="10.300" r="3.100" fill="#fff" stroke="#2a3c9c" stroke-width="1"/><path d="M16 12v4h-4z" fill="#000"/></svg>
<svg style="left:218px;top:332px" width="16" height="16" viewBox="0 0 16 16"><path d="M10.500 3.500L14 .500l1.500 1.500-3 3.500z" fill="#101870" stroke="#101870" stroke-width=".8"/><path d="M8.500 3.500l2-1 2.500 3-1.500 1.500z" fill="#fff" stroke="#203070" stroke-width=".7"/><path d="M1 7.500l7.500-4 3.500 4-6 6z" fill="#fff" stroke="#101010" stroke-width="1"/><path d="M5.500 5.500l4 5-1.500 1.500-4.500-5.500z" fill="#f8f020"/><path d="M2.500 8l4 4.500" stroke="#101010" stroke-width=".7"/><path d="M0 14.500h1M2 14.500h1M4 14l1.500-1" stroke="#f0e800" stroke-width="1.200"/><path d="M16 12v4h-4z" fill="#000"/></svg>
<div class="a" style="left:216px;top:353px;width:21px;height:2px;border-top:1px solid #a0a0a0;border-bottom:1px solid #fff"></div>
<svg style="left:218px;top:361px" width="16" height="16" viewBox="0 0 16 16"><path d="M10 5L14.500 .500l1.500 1.500v2L12 8z" fill="#f8b818" stroke="#a86810" stroke-width=".6"/><path d="M8.500 6.500L10 5l2 3-1.500 1.500z" fill="#f4f4f4" stroke="#304080" stroke-width=".5"/><path d="M5.500 10l3-3.500 2 3-3 3.500z" fill="#d00828" stroke="#283888" stroke-width=".9"/><path d="M6.500 10.500l1.500 1" stroke="#fff" stroke-width=".8"/><path d="M.500 13.500h3M8 13.500h2" stroke="#1c3c9c" stroke-width="1.400"/><path d="M16 12v4h-4z" fill="#000"/></svg>
<svg style="left:218px;top:382px" width="16" height="16" viewBox="0 0 16 16"><path d="M8 1.500v13M1.500 8h13" stroke="#1c3c9c" stroke-width="1.300"/><path d="M8 .500l2.500 3h-5zM8 15.500l2.500-3h-5zM.500 8l3-2.500v5zM15.500 8l-3-2.500v5z" fill="#1c3c9c"/></svg>
<svg style="left:218px;top:404px" width="16" height="16" viewBox="0 0 16 16"><path d="M8 0v16" stroke="#1c3c9c" stroke-width="1.200"/><path d="M6 2.500v11.500h-4.500z" fill="#f4f8ff" stroke="#1c3c9c" stroke-width="1"/><path d="M10 2.500v11.500h4.500z" fill="#f4f8ff" stroke="#1c3c9c" stroke-width="1"/></svg>
<svg style="left:218px;top:427px" width="16" height="16" viewBox="0 0 16 16"><path d="M5 3.500a5.500 5.500 0 1 0 6 0" fill="none" stroke="#1c3c9c" stroke-width="2.200"/><path d="M3 1h5.500v5.500z" fill="#1c3c9c"/></svg>
<svg style="left:218px;top:448px" width="16" height="16" viewBox="0 0 16 16"><path d="M5 6a3 3 0 0 1 6 0a3.200 3.200 0 0 1 1 6.500h-8a3.200 3.200 0 0 1 1-6.500z" fill="#e8f0fc" stroke="#1c3c9c" stroke-width="1.200"/><path d="M7 6v3.500h-3v1.500h8v-1.500h-3v-3.500z" fill="#fff" stroke="#1c3c9c" stroke-width=".9"/></svg>
<div class="a" style="left:216px;top:469px;width:21px;height:2px;border-top:1px solid #a0a0a0;border-bottom:1px solid #fff"></div>
<svg style="left:218px;top:476px" width="16" height="16" viewBox="0 0 16 16"><path d="M0.500 8l6-5 5 4-6 5z" fill="#dce8fa" stroke="#1c3c9c" stroke-width="1.200"/><path d="M8 3l3-2.500 4.500 4-6.500 6" fill="none" stroke="#1c3c9c" stroke-width="1.200"/></svg>
<svg style="left:218px;top:497px" width="16" height="16" viewBox="0 0 16 16"><path d="M0.500 6h4.500" stroke="#1c3c9c" stroke-width="1.800"/><path d="M6.500 6h1.500M9 6h1.500" stroke="#1c3c9c" stroke-width="1.400"/><path d="M15 0.500L9.500 13" stroke="#1c3c9c" stroke-width="1.300"/></svg>
<svg style="left:218px;top:520px" width="16" height="16" viewBox="0 0 16 16"><path d="M0.500 8h7" stroke="#1c3c9c" stroke-width="1.800"/><path d="M9 8h1.500M11.500 8h1.500M14 8h1.500" stroke="#1c3c9c" stroke-width="1.400"/><path d="M10 1L3.500 15" stroke="#1c3c9c" stroke-width="1.300"/></svg>
<svg style="left:218px;top:542px" width="16" height="16" viewBox="0 0 16 16"><path d="M4 4.500h-2.500v8h13v-8h-2.500" fill="#cfe0f8" stroke="#1c3c9c" stroke-width="1.300"/><circle cx="4" cy="4.500" r="1.300" fill="#1c3c9c"/><circle cx="12" cy="4.500" r="1.300" fill="#1c3c9c"/></svg>
<svg style="left:218px;top:564px" width="16" height="16" viewBox="0 0 16 16"><path d="M2.500 15.500v-8l5-5.500h8" fill="none" stroke="#101010" stroke-width="1.200"/><path d="M2.500 6v-4h4" fill="none" stroke="#404040" stroke-width="1" stroke-dasharray="1 1"/></svg>
<svg style="left:218px;top:586px" width="16" height="16" viewBox="0 0 16 16"><path d="M2 15v-5a8 8 0 0 1 8-8h5" fill="none" stroke="#1c3c9c" stroke-width="1.300"/><path d="M2 8v-6h6" fill="none" stroke="#1c3c9c" stroke-width="1" stroke-dasharray="1 1"/></svg>
<svg style="left:218px;top:609px" width="16" height="16" viewBox="0 0 16 16"><path d="M.500 5h3v-2l3.500 3-3.500 3v-2h-3z" fill="#f8e010" stroke="#b06000" stroke-width=".8"/><path d="M15.500 5h-3v-2l-3.500 3 3.500 3v-2h3z" fill="#f8e010" stroke="#b06000" stroke-width=".8"/><path d="M2 12h6" stroke="#102878" stroke-width="2"/><path d="M9 12h2M12 12h2" stroke="#2a58d0" stroke-width="2"/></svg>
<div class="a" style="left:215px;top:632px;width:24px;height:1px;background:#909090"></div>
<div class="a" style="left:214px;top:633px;width:1px;height:123px;background:#f0f0f0"></div>
<svg style="left:0;top:0" width="1392" height="784" viewBox="0 0 1392 784"><path d="M571.5 228.500h71M607.500 193v72" stroke="#fff" stroke-width="1" fill="none"/><rect x="604.500" y="225.500" width="6" height="6" fill="none" stroke="#fff"/>
<g stroke="#fff" stroke-width="1" fill="none"><rect x="255.500" y="711.500" width="12" height="12"/><path d="M261.500 717.500V655M261.500 717.500H325"/><path d="M261.500 640l-6 15h12zM261.500 640v15M259.500 648v7M263.500 648v7"/><path d="M340 717.500l-15-6v12zM340 717.500h-15M332 715.500h-7M332 719.500h-7"/></g>
<text x="263.700" y="628.500" text-anchor="middle" fill="#fff" font-family="DejaVu Sans Light,DejaVu Sans,sans-serif" font-weight="200" font-size="22">Y</text>
<text x="359.400" y="727" text-anchor="middle" fill="#fff" font-family="DejaVu Sans Light,DejaVu Sans,sans-serif" font-weight="200" font-size="22">X</text>
<g shape-rendering="crispEdges"><rect x="453" y="393" width="4" height="23" fill="#ff0033"/><path d="M453.500 382v11M456.500 382v11M453.500 416v8M456.500 416v8" stroke="#ff0033" stroke-width="1" fill="none"/><path d="M451 392.500h-1.500v25h1.500M460 392.500h1.500v25h-1.500" stroke="#00ffff" fill="none" stroke-width="1"/><path d="M454 381.500l1 2 1-1.500h2" stroke="#fff" fill="none" stroke-width=".9"/><path d="M457.500 392.500h2.500v4h-2.500M451.500 416.500h8M452.500 421.500h6M453.500 421.500v3.500M457.500 421.500v3.500" stroke="#ffff00" fill="none" stroke-width="1"/><path d="M451.500 416v5M459.500 416v5M454 425.500h4" stroke="#fff" fill="none" stroke-width=".9"/><path d="M460 393l1 3" stroke="#00ff00" stroke-width="1.500"/><path d="M448.800 402.500v4.500M460.800 402.500v4.500" stroke="#00ff00" stroke-width="1.800"/><rect x="478" y="394.500" width="5" height="3.500" fill="#ff0033"/><path d="M478 392.500h-1.500v6.500h6" stroke="#00ffff" fill="none" stroke-width="1"/><path d="M478 393.500h4" stroke="#ffff00"/><path d="M475.500 394.500v2.500M479 398.500h2" stroke="#00ff00" stroke-width="1.400"/><path d="M479 403.500h4.500v3h-2l-.5 1-.5-1h-2z" fill="#ff0033" stroke="#ff0033" stroke-width=".8"/><rect x="481" y="404" width="1.500" height="1.200" fill="#000"/><path d="M470.500 402.500h1v4.500" stroke="#ff0033" stroke-width="1.300" fill="none"/><rect x="478.500" y="412.500" width="4" height="3" fill="none" stroke="#ff0033" stroke-width="1.400"/><path d="M476 414.500h2M485 414h5" stroke="#ff0033" stroke-width="1.600"/><rect x="470.500" y="415.500" width="1.200" height="1.200" fill="#ff0033"/><path d="M493 415.500l2.500-3.500" stroke="#ff0033" stroke-width="1.300"/><path d="M493 414.500v1.500" stroke="#00ff00" stroke-width="1.300"/><path d="M360.500 438.500v-2h350v2M360.500 476.500v1.500h350v-1.500" stroke="#ff0033" fill="none" stroke-width="1"/><path d="M530 436h7M530 478.500h7M360 438h2M709 438h2M360 476h2M709 476h2" stroke="#ff0033" stroke-width="1.600"/><path d="M378.8 441.500H401.8" stroke="#ff0033" stroke-width="1"/><path d="M387.8 440.500h5" stroke="#ff0033" stroke-width="1.500"/><path d="M408.1 441.500H429.9" stroke="#ff0033" stroke-width="1"/><path d="M416.5 440.500h5" stroke="#ff0033" stroke-width="1.500"/><path d="M465.0 441.500H487.1" stroke="#ff0033" stroke-width="1"/><path d="M473.6 440.500h5" stroke="#ff0033" stroke-width="1.500"/><path d="M495.2 441.500H518.7" stroke="#ff0033" stroke-width="1"/><path d="M504.5 440.500h5" stroke="#ff0033" stroke-width="1.500"/><path d="M553.2 441.500H576.2" stroke="#ff0033" stroke-width="1"/><path d="M562.2 440.500h5" stroke="#ff0033" stroke-width="1.500"/><path d="M582.2 441.500H603.8" stroke="#ff0033" stroke-width="1"/><path d="M590.5 440.500h5" stroke="#ff0033" stroke-width="1.500"/><path d="M638.9 441.500H661.0" stroke="#ff0033" stroke-width="1"/><path d="M647.4 440.500h5" stroke="#ff0033" stroke-width="1.500"/><path d="M667.6 441.500H691.1" stroke="#ff0033" stroke-width="1"/><path d="M676.9 440.500h5" stroke="#ff0033" stroke-width="1.500"/><rect x="360" y="461.500" width="351" height="5" fill="#ff0033"/><path d="M360 467.500h351" stroke="#00ff00" stroke-width="1.200"/><path d="M360 469.500h351" stroke="#00ffff" stroke-width="1.400"/><path d="M360 471h351" stroke="#00a0a0" stroke-width=".6"/><path d="M360.6 462v-2.500h2.0v2.500" stroke="#fff" fill="none" stroke-width="1"/><path d="M361.6 463v4" stroke="#fff" stroke-width="1"/><path d="M360.6 460.500h2.0" stroke="#ffff80" stroke-width=".6"/><path d="M388.1 462v-2.500h5.5v2.500" stroke="#fff" fill="none" stroke-width="1"/><path d="M390.9 463v4" stroke="#fff" stroke-width="1"/><path d="M388.1 460.500h5.5" stroke="#ffff80" stroke-width=".6"/><path d="M418.0 462v-2.500h5.5v2.500" stroke="#fff" fill="none" stroke-width="1"/><path d="M420.7 463v4" stroke="#fff" stroke-width="1"/><path d="M418.0 460.500h5.5" stroke="#ffff80" stroke-width=".6"/><path d="M445.0 462v-2.500h5.5v2.500" stroke="#fff" fill="none" stroke-width="1"/><path d="M447.8 463v4" stroke="#fff" stroke-width="1"/><path d="M445.0 460.500h5.5" stroke="#ffff80" stroke-width=".6"/><path d="M472.3 462v-2.500h5.5v2.500" stroke="#fff" fill="none" stroke-width="1"/><path d="M475.1 463v4" stroke="#fff" stroke-width="1"/><path d="M472.3 460.500h5.5" stroke="#ffff80" stroke-width=".6"/><path d="M501.9 462v-2.500h5.5v2.500" stroke="#fff" fill="none" stroke-width="1"/><path d="M504.7 463v4" stroke="#fff" stroke-width="1"/><path d="M501.9 460.500h5.5" stroke="#ffff80" stroke-width=".6"/><path d="M532.4 462v-2.500h5.5v2.500" stroke="#fff" fill="none" stroke-width="1"/><path d="M535.1 463v4" stroke="#fff" stroke-width="1"/><path d="M532.4 460.500h5.5" stroke="#ffff80" stroke-width=".6"/><path d="M561.7 462v-2.500h5.5v2.500" stroke="#fff" fill="none" stroke-width="1"/><path d="M564.4 463v4" stroke="#fff" stroke-width="1"/><path d="M561.7 460.500h5.5" stroke="#ffff80" stroke-width=".6"/><path d="M591.0 462v-2.500h5.5v2.500" stroke="#fff" fill="none" stroke-width="1"/><path d="M593.7 463v4" stroke="#fff" stroke-width="1"/><path d="M591.0 460.500h5.5" stroke="#ffff80" stroke-width=".6"/><path d="M619.1 462v-2.500h5.5v2.500" stroke="#fff" fill="none" stroke-width="1"/><path d="M621.9 463v4" stroke="#fff" stroke-width="1"/><path d="M619.1 460.500h5.5" stroke="#ffff80" stroke-width=".6"/><path d="M646.7 462v-2.500h5.5v2.500" stroke="#fff" fill="none" stroke-width="1"/><path d="M649.5 463v4" stroke="#fff" stroke-width="1"/><path d="M646.7 460.500h5.5" stroke="#ffff80" stroke-width=".6"/><path d="M675.8 462v-2.500h5.5v2.500" stroke="#fff" fill="none" stroke-width="1"/><path d="M678.5 463v4" stroke="#fff" stroke-width="1"/><path d="M675.8 460.500h5.5" stroke="#ffff80" stroke-width=".6"/><path d="M707.4 462v-2.500h2.0v2.500" stroke="#fff" fill="none" stroke-width="1"/><path d="M708.4 463v4" stroke="#fff" stroke-width="1"/><path d="M707.4 460.500h2.0" stroke="#ffff80" stroke-width=".6"/><path d="M374.5 467.500h3.500" stroke="#00ff00" stroke-width="2.400"/><path d="M371.7 464h9" stroke="#000" stroke-width="1" stroke-dasharray="1.500 1"/><path d="M363.6 470l1.500-1.500 1.500 1.500" stroke="#00ffff" fill="none" stroke-width="1"/><path d="M404.1 467.500h3.500" stroke="#00ff00" stroke-width="2.400"/><path d="M401.3 464h9" stroke="#000" stroke-width="1" stroke-dasharray="1.500 1"/><path d="M392.9 470l1.500-1.500 1.500 1.500" stroke="#00ffff" fill="none" stroke-width="1"/><path d="M432.6 467.500h3.500" stroke="#00ff00" stroke-width="2.400"/><path d="M429.8 464h9" stroke="#000" stroke-width="1" stroke-dasharray="1.500 1"/><path d="M422.7 470l1.500-1.500 1.500 1.500" stroke="#00ffff" fill="none" stroke-width="1"/><path d="M459.7 467.500h3.500" stroke="#00ff00" stroke-width="2.400"/><path d="M456.9 464h9" stroke="#000" stroke-width="1" stroke-dasharray="1.500 1"/><path d="M449.8 470l1.500-1.500 1.500 1.500" stroke="#00ffff" fill="none" stroke-width="1"/><path d="M488.2 467.500h3.500" stroke="#00ff00" stroke-width="2.400"/><path d="M485.4 464h9" stroke="#000" stroke-width="1" stroke-dasharray="1.500 1"/><path d="M477.1 470l1.500-1.500 1.500 1.500" stroke="#00ffff" fill="none" stroke-width="1"/><path d="M518.2 467.500h3.500" stroke="#00ff00" stroke-width="2.400"/><path d="M515.4 464h9" stroke="#000" stroke-width="1" stroke-dasharray="1.500 1"/><path d="M506.7 470l1.500-1.500 1.500 1.500" stroke="#00ffff" fill="none" stroke-width="1"/><path d="M548.1 467.500h3.500" stroke="#00ff00" stroke-width="2.400"/><path d="M545.3 464h9" stroke="#000" stroke-width="1" stroke-dasharray="1.500 1"/><path d="M537.1 470l1.500-1.500 1.500 1.500" stroke="#00ffff" fill="none" stroke-width="1"/><path d="M577.4 467.500h3.500" stroke="#00ff00" stroke-width="2.400"/><path d="M574.6 464h9" stroke="#000" stroke-width="1" stroke-dasharray="1.500 1"/><path d="M566.4 470l1.500-1.500 1.500 1.500" stroke="#00ffff" fill="none" stroke-width="1"/><path d="M606.1 467.500h3.500" stroke="#00ff00" stroke-width="2.400"/><path d="M603.3 464h9" stroke="#000" stroke-width="1" stroke-dasharray="1.500 1"/><path d="M595.7 470l1.500-1.500 1.500 1.500" stroke="#00ffff" fill="none" stroke-width="1"/><path d="M634.0 467.500h3.500" stroke="#00ff00" stroke-width="2.400"/><path d="M631.2 464h9" stroke="#000" stroke-width="1" stroke-dasharray="1.500 1"/><path d="M623.9 470l1.500-1.500 1.500 1.500" stroke="#00ffff" fill="none" stroke-width="1"/><path d="M662.3 467.500h3.500" stroke="#00ff00" stroke-width="2.400"/><path d="M659.5 464h9" stroke="#000" stroke-width="1" stroke-dasharray="1.500 1"/><path d="M651.5 470l1.500-1.500 1.500 1.500" stroke="#00ffff" fill="none" stroke-width="1"/><path d="M691.7 467.500h3.500" stroke="#00ff00" stroke-width="2.400"/><path d="M688.9 464h9" stroke="#000" stroke-width="1" stroke-dasharray="1.500 1"/><path d="M680.5 470l1.500-1.500 1.500 1.500" stroke="#00ffff" fill="none" stroke-width="1"/><path d="M371.4 483.500h9" stroke="#ffff00" stroke-width="1.300"/><path d="M370.4 483h2.500M379.4 483h2" stroke="#00ff00" stroke-width="1.300"/><path d="M375.9 484v4.500M373.9 488.500h4" stroke="#ff0033" stroke-width="1.600" fill="none"/><path d="M374.4 485.500l-2 1.500M377.4 485.500l2 1.500" stroke="#00ffff" stroke-width=".9"/><path d="M372.9 482.500h1.200M377.9 482.500h1.200" stroke="#fff" stroke-width="1"/><path d="M371.9 496.500h8M375.4 494.500h2.500" stroke="#ff0033" stroke-width="1.700"/><path d="M401.6 483.500h9" stroke="#ffff00" stroke-width="1.300"/><path d="M400.6 483h2.500M409.6 483h2" stroke="#00ff00" stroke-width="1.300"/><path d="M406.1 484v4.500M404.1 488.500h4" stroke="#ff0033" stroke-width="1.600" fill="none"/><path d="M404.6 485.500l-2 1.500M407.6 485.500l2 1.500" stroke="#00ffff" stroke-width=".9"/><path d="M403.1 482.500h1.200M408.1 482.500h1.200" stroke="#fff" stroke-width="1"/><path d="M402.1 496.500h8M405.6 494.500h2.500" stroke="#ff0033" stroke-width="1.700"/><path d="M430.3 483.500h9" stroke="#ffff00" stroke-width="1.300"/><path d="M429.3 483h2.500M438.3 483h2" stroke="#00ff00" stroke-width="1.300"/><path d="M434.8 484v4.500M432.8 488.500h4" stroke="#ff0033" stroke-width="1.600" fill="none"/><path d="M433.3 485.500l-2 1.500M436.3 485.500l2 1.500" stroke="#00ffff" stroke-width=".9"/><path d="M431.8 482.500h1.200M436.8 482.500h1.200" stroke="#fff" stroke-width="1"/><path d="M430.8 496.500h8M434.3 494.500h2.500" stroke="#ff0033" stroke-width="1.700"/><path d="M457.6 483.500h9" stroke="#ffff00" stroke-width="1.300"/><path d="M456.6 483h2.500M465.6 483h2" stroke="#00ff00" stroke-width="1.300"/><path d="M462.1 484v4.500M460.1 488.500h4" stroke="#ff0033" stroke-width="1.600" fill="none"/><path d="M460.6 485.500l-2 1.500M463.6 485.500l2 1.500" stroke="#00ffff" stroke-width=".9"/><path d="M459.1 482.500h1.200M464.1 482.500h1.200" stroke="#fff" stroke-width="1"/><path d="M458.1 496.500h8M461.6 494.500h2.500" stroke="#ff0033" stroke-width="1.700"/><path d="M486.4 483.500h9" stroke="#ffff00" stroke-width="1.300"/><path d="M485.4 483h2.500M494.4 483h2" stroke="#00ff00" stroke-width="1.300"/><path d="M490.9 484v4.500M488.9 488.500h4" stroke="#ff0033" stroke-width="1.600" fill="none"/><path d="M489.4 485.500l-2 1.500M492.4 485.500l2 1.500" stroke="#00ffff" stroke-width=".9"/><path d="M487.9 482.500h1.200M492.9 482.500h1.200" stroke="#fff" stroke-width="1"/><path d="M486.9 496.500h8M490.4 494.500h2.500" stroke="#ff0033" stroke-width="1.700"/><path d="M516.5 483.500h9" stroke="#ffff00" stroke-width="1.300"/><path d="M515.5 483h2.500M524.5 483h2" stroke="#00ff00" stroke-width="1.300"/><path d="M521.0 484v4.500M519.0 488.500h4" stroke="#ff0033" stroke-width="1.600" fill="none"/><path d="M519.5 485.500l-2 1.500M522.5 485.500l2 1.500" stroke="#00ffff" stroke-width=".9"/><path d="M518.0 482.500h1.200M523.0 482.500h1.200" stroke="#fff" stroke-width="1"/><path d="M517.0 496.500h8M520.5 494.500h2.500" stroke="#ff0033" stroke-width="1.700"/><path d="M545.3 483.500h9" stroke="#ffff00" stroke-width="1.300"/><path d="M544.3 483h2.500M553.3 483h2" stroke="#00ff00" stroke-width="1.300"/><path d="M549.8 484v4.500M547.8 488.500h4" stroke="#ff0033" stroke-width="1.600" fill="none"/><path d="M548.3 485.500l-2 1.500M551.3 485.500l2 1.500" stroke="#00ffff" stroke-width=".9"/><path d="M546.8 482.500h1.200M551.8 482.500h1.200" stroke="#fff" stroke-width="1"/><path d="M545.8 496.500h8M549.3 494.500h2.500" stroke="#ff0033" stroke-width="1.700"/><path d="M574.6 483.500h9" stroke="#ffff00" stroke-width="1.300"/><path d="M573.6 483h2.500M582.6 483h2" stroke="#00ff00" stroke-width="1.300"/><path d="M579.1 484v4.500M577.1 488.500h4" stroke="#ff0033" stroke-width="1.600" fill="none"/><path d="M577.6 485.500l-2 1.500M580.6 485.500l2 1.500" stroke="#00ffff" stroke-width=".9"/><path d="M576.1 482.500h1.200M581.1 482.500h1.200" stroke="#fff" stroke-width="1"/><path d="M575.1 496.500h8M578.6 494.500h2.500" stroke="#ff0033" stroke-width="1.700"/><path d="M603.3 483.500h9" stroke="#ffff00" stroke-width="1.300"/><path d="M602.3 483h2.500M611.3 483h2" stroke="#00ff00" stroke-width="1.300"/><path d="M607.8 484v4.500M605.8 488.500h4" stroke="#ff0033" stroke-width="1.600" fill="none"/><path d="M606.3 485.500l-2 1.500M609.3 485.500l2 1.500" stroke="#00ffff" stroke-width=".9"/><path d="M604.8 482.500h1.200M609.8 482.500h1.200" stroke="#fff" stroke-width="1"/><path d="M603.8 496.500h8M607.3 494.500h2.500" stroke="#ff0033" stroke-width="1.700"/><path d="M631.5 483.500h9" stroke="#ffff00" stroke-width="1.300"/><path d="M630.5 483h2.500M639.5 483h2" stroke="#00ff00" stroke-width="1.300"/><path d="M636.0 484v4.500M634.0 488.500h4" stroke="#ff0033" stroke-width="1.600" fill="none"/><path d="M634.5 485.500l-2 1.500M637.5 485.500l2 1.500" stroke="#00ffff" stroke-width=".9"/><path d="M633.0 482.500h1.200M638.0 482.500h1.200" stroke="#fff" stroke-width="1"/><path d="M632.0 496.500h8M635.5 494.500h2.500" stroke="#ff0033" stroke-width="1.700"/><path d="M660.2 483.500h9" stroke="#ffff00" stroke-width="1.300"/><path d="M659.2 483h2.500M668.2 483h2" stroke="#00ff00" stroke-width="1.300"/><path d="M664.7 484v4.500M662.7 488.500h4" stroke="#ff0033" stroke-width="1.600" fill="none"/><path d="M663.2 485.500l-2 1.500M666.2 485.500l2 1.500" stroke="#00ffff" stroke-width=".9"/><path d="M661.7 482.500h1.200M666.7 482.500h1.200" stroke="#fff" stroke-width="1"/><path d="M660.7 496.500h8M664.2 494.500h2.500" stroke="#ff0033" stroke-width="1.700"/><path d="M690.4 483.500h9" stroke="#ffff00" stroke-width="1.300"/><path d="M689.4 483h2.500M698.4 483h2" stroke="#00ff00" stroke-width="1.300"/><path d="M694.9 484v4.500M692.9 488.500h4" stroke="#ff0033" stroke-width="1.600" fill="none"/><path d="M693.4 485.500l-2 1.500M696.4 485.500l2 1.500" stroke="#00ffff" stroke-width=".9"/><path d="M691.9 482.500h1.200M696.9 482.500h1.200" stroke="#fff" stroke-width="1"/><path d="M690.9 496.500h8M694.4 494.500h2.500" stroke="#ff0033" stroke-width="1.700"/></g>
<g shape-rendering="crispEdges"><path d="M776.2 405.5H799.9" stroke="#ff00ff" stroke-width="1"/><path d="M839.9 398.5H861.7" stroke="#ff00ff" stroke-width="1"/><path d="M781.2 422.5H799.9" stroke="#ff00ff" stroke-width="1"/><path d="M799.9 415.5H824.8" stroke="#ff00ff" stroke-width="1"/><path d="M800.3 429.0H825.5" stroke="#ff00ff" stroke-width="2"/><path d="M824.4 422.5H839.9" stroke="#ff00ff" stroke-width="1"/><path d="M763.1 459.5H793.3" stroke="#ff00ff" stroke-width="1"/><path d="M794.3 459.5H825.5" stroke="#ff00ff" stroke-width="1"/><path d="M763.1 484.5H793.3" stroke="#ff00ff" stroke-width="1"/><path d="M824.4 484.5H876.8" stroke="#ff00ff" stroke-width="1"/><path d="M792.3 488.5H824.8" stroke="#ff00ff" stroke-width="1.4"/><path d="M824.4 451.0H876.8" stroke="#ff00ff" stroke-width="2"/><path d="M824.8 443.5H875.8" stroke="#ff00ff" stroke-width="1"/><path d="M824.8 467.5H875.8" stroke="#ff00ff" stroke-width="1"/><path d="M860.7 422.5H925.1" stroke="#ff00ff" stroke-width="1"/><path d="M901.9 405.5H925.1" stroke="#ff00ff" stroke-width="1"/><path d="M876.8 459.5H937.1" stroke="#ff00ff" stroke-width="1"/><path d="M874.7 488.5H907.9" stroke="#ff00ff" stroke-width="1.4"/><path d="M906.9 484.5H925.1" stroke="#ff00ff" stroke-width="1"/><path d="M853.5 394.1V405.8" stroke="#ff00ff" stroke-width="1"/><path d="M789.5 405.2V438.4" stroke="#ff00ff" stroke-width="1"/><path d="M814.0 410.2V438.4" stroke="#ff00ff" stroke-width="2"/><path d="M834.5 410.2V442.4" stroke="#ff00ff" stroke-width="1"/><path d="M780.5 439.4V488.7" stroke="#ff00ff" stroke-width="1"/><path d="M810.5 439.4V496.7" stroke="#ff00ff" stroke-width="1"/><path d="M839.5 455.5V483.6" stroke="#ff00ff" stroke-width="1"/><path d="M865.5 455.5V483.6" stroke="#ff00ff" stroke-width="1"/><path d="M852.5 441.4V455.5" stroke="#ff00ff" stroke-width="1"/><path d="M870.5 410.2V460.5" stroke="#ff00ff" stroke-width="1"/><path d="M890.5 409.2V438.4" stroke="#ff00ff" stroke-width="1"/><path d="M915.5 405.2V438.4" stroke="#ff00ff" stroke-width="1"/><path d="M893.5 439.4V496.7" stroke="#ff00ff" stroke-width="1"/><path d="M924.5 439.4V488.7" stroke="#ff00ff" stroke-width="1"/><path d="M775.2 420.5H784.2" stroke="#ff9900" stroke-width="1"/><path d="M793.3 429.5H805.3" stroke="#ff9900" stroke-width="1"/><path d="M784.2 455.5H803.3" stroke="#ff9900" stroke-width="1"/><path d="M763.1 456.5H772.1" stroke="#ff9900" stroke-width="1"/><path d="M816.4 445.5H840.5" stroke="#ff9900" stroke-width="1"/><path d="M816.4 465.5H834.5" stroke="#ff9900" stroke-width="1"/><path d="M841.5 464.5H857.6" stroke="#ff9900" stroke-width="1"/><path d="M867.7 466.5H885.8" stroke="#ff9900" stroke-width="1"/><path d="M898.9 457.5H917.0" stroke="#ff9900" stroke-width="1"/><path d="M894.5 427.5H908.6" stroke="#ff9900" stroke-width="1"/><path d="M831.5 450.4V464.5" stroke="#ff9900" stroke-width="1"/><path d="M870.5 450.4V465.5" stroke="#ff9900" stroke-width="1"/><path d="M784.5 438.4V448.4" stroke="#ff9900" stroke-width="1"/><path d="M772.5 438.4V448.4" stroke="#ff9900" stroke-width="1"/><path d="M887.5 430.3V446.4" stroke="#ff9900" stroke-width="1"/><path d="M907.5 430.3V446.4" stroke="#ff9900" stroke-width="1"/><path d="M917.5 430.3V446.4" stroke="#ff9900" stroke-width="1"/><path d="M800.5 474.6V484.6" stroke="#ff9900" stroke-width="1"/><path d="M847.5 477.6V488.7" stroke="#ff9900" stroke-width="1"/><path d="M855.5 477.6V488.7" stroke="#ff9900" stroke-width="1"/><path d="M913.5 476.6V488.7" stroke="#ff9900" stroke-width="1"/><path d="M773.5 476.6V488.7" stroke="#ff9900" stroke-width="1"/><path d="M831.5 476.6V484.6" stroke="#ff9900" stroke-width="1"/><path d="M816.5 410.2V414.2" stroke="#ff9900" stroke-width="1"/><path d="M910.5 410.2V416.2" stroke="#ff9900" stroke-width="1"/><path d="M792.3 489.5H798.3" stroke="#ff9900" stroke-width="1"/><path d="M875.8 489.5H881.8" stroke="#ff9900" stroke-width="1"/><path d="M820.4 415.5H830.5" stroke="#ff9900" stroke-width="1"/><path d="M798.3 412.5H804.3" stroke="#ff9900" stroke-width="1"/><path d="M843.5 454.4V462.5" stroke="#ff9900" stroke-width="1"/><path d="M859.7 416.5H865.7" stroke="#ff9900" stroke-width="1"/><path d="M919.0 415.5H926.1" stroke="#ff9900" stroke-width="1"/><rect x="784.0" y="404.1" width="5.6" height="2.0" fill="#ff0000"/><rect x="782.2" y="408.7" width="2.0" height="5.0" fill="#ff0000"/><rect x="777.2" y="418.4" width="6.0" height="1.6" fill="#ff0000"/><rect x="785.4" y="420.8" width="2.8" height="2.8" fill="#ff0000"/><rect x="793.3" y="415.2" width="6.0" height="2.8" fill="#ff0000"/><rect x="800.5" y="412.2" width="4.4" height="2.0" fill="#ff0000"/><rect x="807.1" y="409.6" width="2.4" height="4.4" fill="#ff0000"/><rect x="812.4" y="413.2" width="3.2" height="6.0" fill="#ff0000"/><rect x="814.4" y="409.8" width="2.0" height="2.8" fill="#ff0000"/><rect x="822.4" y="417.2" width="4.8" height="2.0" fill="#ff0000"/><rect x="829.7" y="421.9" width="3.6" height="2.8" fill="#ff0000"/><rect x="835.5" y="415.8" width="4.0" height="1.6" fill="#ff0000"/><rect x="832.3" y="410.0" width="1.6" height="4.4" fill="#ff0000"/><rect x="793.9" y="427.1" width="5.6" height="2.4" fill="#ff0000"/><rect x="805.3" y="420.1" width="2.0" height="5.0" fill="#ff0000"/><rect x="808.6" y="424.9" width="3.6" height="3.6" fill="#ff0000"/><rect x="816.4" y="426.7" width="6.0" height="2.4" fill="#ff0000"/><rect x="827.5" y="426.7" width="4.0" height="2.4" fill="#ff0000"/><rect x="812.6" y="429.3" width="2.8" height="4.0" fill="#ff0000"/><rect x="783.8" y="431.3" width="1.6" height="8.0" fill="#ff0000"/><rect x="770.7" y="439.9" width="2.0" height="7.0" fill="#ff0000"/><rect x="831.5" y="433.9" width="2.0" height="4.8" fill="#ff0000"/><rect x="830.3" y="442.8" width="4.4" height="2.4" fill="#ff0000"/><rect x="846.6" y="442.2" width="6.0" height="2.4" fill="#ff0000"/><rect x="850.8" y="446.4" width="2.8" height="6.0" fill="#ff0000"/><rect x="842.8" y="450.6" width="2.4" height="3.6" fill="#ff0000"/><rect x="868.9" y="440.4" width="2.4" height="6.0" fill="#ff0000"/><rect x="866.5" y="434.1" width="2.4" height="5.2" fill="#ff0000"/><rect x="869.9" y="410.2" width="1.6" height="4.8" fill="#ff0000"/><rect x="884.6" y="409.6" width="2.4" height="4.4" fill="#ff0000"/><rect x="861.7" y="415.2" width="4.0" height="2.0" fill="#ff0000"/><rect x="874.1" y="415.6" width="5.2" height="2.0" fill="#ff0000"/><rect x="868.3" y="420.8" width="3.6" height="3.6" fill="#ff0000"/><rect x="886.6" y="421.0" width="4.4" height="3.2" fill="#ff0000"/><rect x="911.2" y="421.4" width="4.4" height="3.6" fill="#ff0000"/><rect x="872.1" y="427.3" width="4.4" height="2.0" fill="#ff0000"/><rect x="896.9" y="426.7" width="8.0" height="2.0" fill="#ff0000"/><rect x="910.0" y="405.4" width="5.2" height="3.6" fill="#ff0000"/><rect x="908.8" y="409.6" width="2.4" height="4.4" fill="#ff0000"/><rect x="901.9" y="412.8" width="6.0" height="2.0" fill="#ff0000"/><rect x="919.2" y="414.8" width="5.6" height="2.0" fill="#ff0000"/><rect x="885.4" y="435.4" width="2.0" height="9.1" fill="#ff0000"/><rect x="904.7" y="435.4" width="2.4" height="9.1" fill="#ff0000"/><rect x="915.0" y="436.7" width="2.0" height="7.2" fill="#ff0000"/><rect x="778.2" y="457.9" width="3.2" height="5.2" fill="#ff0000"/><rect x="808.1" y="457.9" width="2.8" height="5.2" fill="#ff0000"/><rect x="789.6" y="454.4" width="5.2" height="2.0" fill="#ff0000"/><rect x="765.1" y="455.5" width="6.0" height="2.0" fill="#ff0000"/><rect x="830.1" y="455.5" width="2.8" height="5.2" fill="#ff0000"/><rect x="820.2" y="463.3" width="7.2" height="2.4" fill="#ff0000"/><rect x="834.7" y="465.7" width="3.6" height="2.8" fill="#ff0000"/><rect x="837.7" y="467.5" width="1.6" height="4.0" fill="#ff0000"/><rect x="842.0" y="455.9" width="2.0" height="6.0" fill="#ff0000"/><rect x="845.6" y="463.5" width="6.0" height="2.0" fill="#ff0000"/><rect x="855.6" y="455.5" width="2.0" height="5.2" fill="#ff0000"/><rect x="864.1" y="465.9" width="2.0" height="5.2" fill="#ff0000"/><rect x="868.7" y="455.1" width="2.0" height="6.0" fill="#ff0000"/><rect x="873.3" y="463.3" width="4.8" height="2.4" fill="#ff0000"/><rect x="890.2" y="458.1" width="3.2" height="4.8" fill="#ff0000"/><rect x="921.2" y="458.1" width="3.6" height="4.8" fill="#ff0000"/><rect x="903.9" y="456.3" width="8.0" height="1.6" fill="#ff0000"/><rect x="773.3" y="477.2" width="2.4" height="6.0" fill="#ff0000"/><rect x="775.4" y="482.8" width="3.6" height="3.6" fill="#ff0000"/><rect x="798.7" y="477.0" width="2.4" height="5.2" fill="#ff0000"/><rect x="802.3" y="483.4" width="3.2" height="4.4" fill="#ff0000"/><rect x="793.7" y="488.5" width="3.2" height="2.4" fill="#ff0000"/><rect x="809.6" y="488.0" width="3.6" height="5.2" fill="#ff0000"/><rect x="819.0" y="491.5" width="4.8" height="1.6" fill="#ff0000"/><rect x="813.0" y="477.0" width="1.6" height="5.2" fill="#ff0000"/><rect x="830.9" y="477.4" width="2.0" height="5.2" fill="#ff0000"/><rect x="846.2" y="482.2" width="2.0" height="4.0" fill="#ff0000"/><rect x="853.2" y="482.2" width="2.8" height="4.0" fill="#ff0000"/><rect x="854.4" y="477.8" width="1.6" height="3.6" fill="#ff0000"/><rect x="866.7" y="477.4" width="2.0" height="5.2" fill="#ff0000"/><rect x="887.4" y="477.0" width="1.6" height="6.0" fill="#ff0000"/><rect x="885.4" y="483.4" width="2.8" height="4.4" fill="#ff0000"/><rect x="877.4" y="488.5" width="2.8" height="2.4" fill="#ff0000"/><rect x="891.9" y="489.1" width="2.8" height="5.2" fill="#ff0000"/><rect x="901.5" y="491.5" width="4.8" height="1.6" fill="#ff0000"/><rect x="917.8" y="477.0" width="2.4" height="5.2" fill="#ff0000"/><rect x="920.4" y="482.6" width="3.2" height="4.0" fill="#ff0000"/><rect x="912.8" y="478.0" width="1.6" height="5.2" fill="#ff0000"/><rect x="849.6" y="397.5" width="4.0" height="2.0" fill="#ff0000"/><rect x="809.6" y="488.7" width="1.6" height="8.0" fill="#ff0000"/><rect x="893.1" y="488.7" width="1.6" height="8.0" fill="#ff0000"/><path d="M1098.5 405.5H1074.8" stroke="#ff00ff" stroke-width="1"/><path d="M1034.8 398.5H1013.0" stroke="#ff00ff" stroke-width="1"/><path d="M1093.5 422.5H1074.8" stroke="#ff00ff" stroke-width="1"/><path d="M1074.8 415.5H1049.9" stroke="#ff00ff" stroke-width="1"/><path d="M1074.4 429.0H1049.2" stroke="#ff00ff" stroke-width="2"/><path d="M1050.3 422.5H1034.8" stroke="#ff00ff" stroke-width="1"/><path d="M1111.6 459.5H1081.4" stroke="#ff00ff" stroke-width="1"/><path d="M1080.4 459.5H1049.2" stroke="#ff00ff" stroke-width="1"/><path d="M1111.6 484.5H1081.4" stroke="#ff00ff" stroke-width="1"/><path d="M1050.3 484.5H997.9" stroke="#ff00ff" stroke-width="1"/><path d="M1082.4 488.5H1049.9" stroke="#ff00ff" stroke-width="1.4"/><path d="M1050.3 451.0H997.9" stroke="#ff00ff" stroke-width="2"/><path d="M1049.9 443.5H998.9" stroke="#ff00ff" stroke-width="1"/><path d="M1049.9 467.5H998.9" stroke="#ff00ff" stroke-width="1"/><path d="M1014.0 422.5H949.7" stroke="#ff00ff" stroke-width="1"/><path d="M972.8 405.5H949.7" stroke="#ff00ff" stroke-width="1"/><path d="M997.9 459.5H937.6" stroke="#ff00ff" stroke-width="1"/><path d="M1000.0 488.5H966.8" stroke="#ff00ff" stroke-width="1.4"/><path d="M967.8 484.5H949.7" stroke="#ff00ff" stroke-width="1"/><path d="M1022.5 394.1V405.8" stroke="#ff00ff" stroke-width="1"/><path d="M1085.5 405.2V438.4" stroke="#ff00ff" stroke-width="1"/><path d="M1061.0 410.2V438.4" stroke="#ff00ff" stroke-width="2"/><path d="M1041.5 410.2V442.4" stroke="#ff00ff" stroke-width="1"/><path d="M1095.5 439.4V488.7" stroke="#ff00ff" stroke-width="1"/><path d="M1064.5 439.4V496.7" stroke="#ff00ff" stroke-width="1"/><path d="M1036.5 455.5V483.6" stroke="#ff00ff" stroke-width="1"/><path d="M1010.5 455.5V483.6" stroke="#ff00ff" stroke-width="1"/><path d="M1022.5 441.4V455.5" stroke="#ff00ff" stroke-width="1"/><path d="M1005.5 410.2V460.5" stroke="#ff00ff" stroke-width="1"/><path d="M984.5 409.2V438.4" stroke="#ff00ff" stroke-width="1"/><path d="M960.5 405.2V438.4" stroke="#ff00ff" stroke-width="1"/><path d="M981.5 439.4V496.7" stroke="#ff00ff" stroke-width="1"/><path d="M951.5 439.4V488.7" stroke="#ff00ff" stroke-width="1"/><path d="M1099.6 420.5H1090.5" stroke="#ff9900" stroke-width="1"/><path d="M1081.4 429.5H1069.4" stroke="#ff9900" stroke-width="1"/><path d="M1090.5 455.5H1071.4" stroke="#ff9900" stroke-width="1"/><path d="M1111.6 456.5H1102.6" stroke="#ff9900" stroke-width="1"/><path d="M1058.3 445.5H1034.2" stroke="#ff9900" stroke-width="1"/><path d="M1058.3 465.5H1040.2" stroke="#ff9900" stroke-width="1"/><path d="M1033.2 464.5H1017.1" stroke="#ff9900" stroke-width="1"/><path d="M1007.0 466.5H988.9" stroke="#ff9900" stroke-width="1"/><path d="M975.8 457.5H957.7" stroke="#ff9900" stroke-width="1"/><path d="M980.2 427.5H966.1" stroke="#ff9900" stroke-width="1"/><path d="M1043.5 450.4V464.5" stroke="#ff9900" stroke-width="1"/><path d="M1005.5 450.4V465.5" stroke="#ff9900" stroke-width="1"/><path d="M1090.5 438.4V448.4" stroke="#ff9900" stroke-width="1"/><path d="M1103.5 438.4V448.4" stroke="#ff9900" stroke-width="1"/><path d="M988.5 430.3V446.4" stroke="#ff9900" stroke-width="1"/><path d="M968.5 430.3V446.4" stroke="#ff9900" stroke-width="1"/><path d="M958.5 430.3V446.4" stroke="#ff9900" stroke-width="1"/><path d="M1075.5 474.6V484.6" stroke="#ff9900" stroke-width="1"/><path d="M1028.5 477.6V488.7" stroke="#ff9900" stroke-width="1"/><path d="M1020.5 477.6V488.7" stroke="#ff9900" stroke-width="1"/><path d="M962.5 476.6V488.7" stroke="#ff9900" stroke-width="1"/><path d="M1102.5 476.6V488.7" stroke="#ff9900" stroke-width="1"/><path d="M1043.5 476.6V484.6" stroke="#ff9900" stroke-width="1"/><path d="M1058.5 410.2V414.2" stroke="#ff9900" stroke-width="1"/><path d="M965.5 410.2V416.2" stroke="#ff9900" stroke-width="1"/><path d="M1082.4 489.5H1076.4" stroke="#ff9900" stroke-width="1"/><path d="M998.9 489.5H992.9" stroke="#ff9900" stroke-width="1"/><path d="M1054.3 415.5H1044.2" stroke="#ff9900" stroke-width="1"/><path d="M1076.4 412.5H1070.4" stroke="#ff9900" stroke-width="1"/><path d="M1032.5 454.4V462.5" stroke="#ff9900" stroke-width="1"/><path d="M1015.0 416.5H1009.0" stroke="#ff9900" stroke-width="1"/><path d="M955.7 415.5H948.6" stroke="#ff9900" stroke-width="1"/><rect x="1085.1" y="404.1" width="5.6" height="2.0" fill="#ff0000"/><rect x="1090.5" y="408.7" width="2.0" height="5.0" fill="#ff0000"/><rect x="1091.5" y="418.4" width="6.0" height="1.6" fill="#ff0000"/><rect x="1086.5" y="420.8" width="2.8" height="2.8" fill="#ff0000"/><rect x="1075.4" y="415.2" width="6.0" height="2.8" fill="#ff0000"/><rect x="1069.8" y="412.2" width="4.4" height="2.0" fill="#ff0000"/><rect x="1065.1" y="409.6" width="2.4" height="4.4" fill="#ff0000"/><rect x="1059.1" y="413.2" width="3.2" height="6.0" fill="#ff0000"/><rect x="1058.3" y="409.8" width="2.0" height="2.8" fill="#ff0000"/><rect x="1047.4" y="417.2" width="4.8" height="2.0" fill="#ff0000"/><rect x="1041.4" y="421.9" width="3.6" height="2.8" fill="#ff0000"/><rect x="1035.2" y="415.8" width="4.0" height="1.6" fill="#ff0000"/><rect x="1040.8" y="410.0" width="1.6" height="4.4" fill="#ff0000"/><rect x="1075.2" y="427.1" width="5.6" height="2.4" fill="#ff0000"/><rect x="1067.4" y="420.1" width="2.0" height="5.0" fill="#ff0000"/><rect x="1062.5" y="424.9" width="3.6" height="3.6" fill="#ff0000"/><rect x="1052.3" y="426.7" width="6.0" height="2.4" fill="#ff0000"/><rect x="1043.2" y="426.7" width="4.0" height="2.4" fill="#ff0000"/><rect x="1059.3" y="429.3" width="2.8" height="4.0" fill="#ff0000"/><rect x="1089.3" y="431.3" width="1.6" height="8.0" fill="#ff0000"/><rect x="1102.0" y="439.9" width="2.0" height="7.0" fill="#ff0000"/><rect x="1041.2" y="433.9" width="2.0" height="4.8" fill="#ff0000"/><rect x="1040.0" y="442.8" width="4.4" height="2.4" fill="#ff0000"/><rect x="1022.1" y="442.2" width="6.0" height="2.4" fill="#ff0000"/><rect x="1021.1" y="446.4" width="2.8" height="6.0" fill="#ff0000"/><rect x="1029.5" y="450.6" width="2.4" height="3.6" fill="#ff0000"/><rect x="1003.4" y="440.4" width="2.4" height="6.0" fill="#ff0000"/><rect x="1005.8" y="434.1" width="2.4" height="5.2" fill="#ff0000"/><rect x="1003.2" y="410.2" width="1.6" height="4.8" fill="#ff0000"/><rect x="987.7" y="409.6" width="2.4" height="4.4" fill="#ff0000"/><rect x="1009.0" y="415.2" width="4.0" height="2.0" fill="#ff0000"/><rect x="995.3" y="415.6" width="5.2" height="2.0" fill="#ff0000"/><rect x="1002.8" y="420.8" width="3.6" height="3.6" fill="#ff0000"/><rect x="983.7" y="421.0" width="4.4" height="3.2" fill="#ff0000"/><rect x="959.1" y="421.4" width="4.4" height="3.6" fill="#ff0000"/><rect x="998.1" y="427.3" width="4.4" height="2.0" fill="#ff0000"/><rect x="969.8" y="426.7" width="8.0" height="2.0" fill="#ff0000"/><rect x="959.5" y="405.4" width="5.2" height="3.6" fill="#ff0000"/><rect x="963.5" y="409.6" width="2.4" height="4.4" fill="#ff0000"/><rect x="966.8" y="412.8" width="6.0" height="2.0" fill="#ff0000"/><rect x="949.9" y="414.8" width="5.6" height="2.0" fill="#ff0000"/><rect x="987.3" y="435.4" width="2.0" height="9.1" fill="#ff0000"/><rect x="967.6" y="435.4" width="2.4" height="9.1" fill="#ff0000"/><rect x="957.7" y="436.7" width="2.0" height="7.2" fill="#ff0000"/><rect x="1093.3" y="457.9" width="3.2" height="5.2" fill="#ff0000"/><rect x="1063.7" y="457.9" width="2.8" height="5.2" fill="#ff0000"/><rect x="1079.8" y="454.4" width="5.2" height="2.0" fill="#ff0000"/><rect x="1103.6" y="455.5" width="6.0" height="2.0" fill="#ff0000"/><rect x="1041.8" y="455.5" width="2.8" height="5.2" fill="#ff0000"/><rect x="1047.2" y="463.3" width="7.2" height="2.4" fill="#ff0000"/><rect x="1036.4" y="465.7" width="3.6" height="2.8" fill="#ff0000"/><rect x="1035.4" y="467.5" width="1.6" height="4.0" fill="#ff0000"/><rect x="1030.7" y="455.9" width="2.0" height="6.0" fill="#ff0000"/><rect x="1023.1" y="463.5" width="6.0" height="2.0" fill="#ff0000"/><rect x="1017.1" y="455.5" width="2.0" height="5.2" fill="#ff0000"/><rect x="1008.6" y="465.9" width="2.0" height="5.2" fill="#ff0000"/><rect x="1004.0" y="455.1" width="2.0" height="6.0" fill="#ff0000"/><rect x="996.5" y="463.3" width="4.8" height="2.4" fill="#ff0000"/><rect x="981.2" y="458.1" width="3.2" height="4.8" fill="#ff0000"/><rect x="949.9" y="458.1" width="3.6" height="4.8" fill="#ff0000"/><rect x="962.7" y="456.3" width="8.0" height="1.6" fill="#ff0000"/><rect x="1098.9" y="477.2" width="2.4" height="6.0" fill="#ff0000"/><rect x="1095.7" y="482.8" width="3.6" height="3.6" fill="#ff0000"/><rect x="1073.6" y="477.0" width="2.4" height="5.2" fill="#ff0000"/><rect x="1069.2" y="483.4" width="3.2" height="4.4" fill="#ff0000"/><rect x="1077.8" y="488.5" width="3.2" height="2.4" fill="#ff0000"/><rect x="1061.5" y="488.0" width="3.6" height="5.2" fill="#ff0000"/><rect x="1050.9" y="491.5" width="4.8" height="1.6" fill="#ff0000"/><rect x="1060.1" y="477.0" width="1.6" height="5.2" fill="#ff0000"/><rect x="1041.8" y="477.4" width="2.0" height="5.2" fill="#ff0000"/><rect x="1026.5" y="482.2" width="2.0" height="4.0" fill="#ff0000"/><rect x="1018.7" y="482.2" width="2.8" height="4.0" fill="#ff0000"/><rect x="1018.7" y="477.8" width="1.6" height="3.6" fill="#ff0000"/><rect x="1006.0" y="477.4" width="2.0" height="5.2" fill="#ff0000"/><rect x="985.7" y="477.0" width="1.6" height="6.0" fill="#ff0000"/><rect x="986.5" y="483.4" width="2.8" height="4.4" fill="#ff0000"/><rect x="994.5" y="488.5" width="2.8" height="2.4" fill="#ff0000"/><rect x="980.0" y="489.1" width="2.8" height="5.2" fill="#ff0000"/><rect x="968.4" y="491.5" width="4.8" height="1.6" fill="#ff0000"/><rect x="954.5" y="477.0" width="2.4" height="5.2" fill="#ff0000"/><rect x="951.1" y="482.6" width="3.2" height="4.0" fill="#ff0000"/><rect x="960.7" y="478.0" width="1.6" height="5.2" fill="#ff0000"/><rect x="1021.1" y="397.5" width="4.0" height="2.0" fill="#ff0000"/><rect x="1063.5" y="488.7" width="1.6" height="8.0" fill="#ff0000"/><rect x="980.0" y="488.7" width="1.6" height="8.0" fill="#ff0000"/><path d="M1275.0 405.5H1251.3" stroke="#ff00ff" stroke-width="1"/><path d="M1211.3 398.5H1189.5" stroke="#ff00ff" stroke-width="1"/><path d="M1270.0 422.5H1251.3" stroke="#ff00ff" stroke-width="1"/><path d="M1251.3 415.5H1226.4" stroke="#ff00ff" stroke-width="1"/><path d="M1250.9 429.0H1225.7" stroke="#ff00ff" stroke-width="2"/><path d="M1226.8 422.5H1211.3" stroke="#ff00ff" stroke-width="1"/><path d="M1288.1 459.5H1257.9" stroke="#ff00ff" stroke-width="1"/><path d="M1256.9 459.5H1225.7" stroke="#ff00ff" stroke-width="1"/><path d="M1288.1 484.5H1257.9" stroke="#ff00ff" stroke-width="1"/><path d="M1226.8 484.5H1174.4" stroke="#ff00ff" stroke-width="1"/><path d="M1258.9 488.5H1226.4" stroke="#ff00ff" stroke-width="1.4"/><path d="M1226.8 451.0H1174.4" stroke="#ff00ff" stroke-width="2"/><path d="M1226.4 443.5H1175.4" stroke="#ff00ff" stroke-width="1"/><path d="M1226.4 467.5H1175.4" stroke="#ff00ff" stroke-width="1"/><path d="M1190.5 422.5H1126.2" stroke="#ff00ff" stroke-width="1"/><path d="M1149.3 405.5H1126.2" stroke="#ff00ff" stroke-width="1"/><path d="M1174.4 459.5H1114.1" stroke="#ff00ff" stroke-width="1"/><path d="M1176.5 488.5H1143.3" stroke="#ff00ff" stroke-width="1.4"/><path d="M1144.3 484.5H1126.2" stroke="#ff00ff" stroke-width="1"/><path d="M1199.5 394.1V405.8" stroke="#ff00ff" stroke-width="1"/><path d="M1262.5 405.2V438.4" stroke="#ff00ff" stroke-width="1"/><path d="M1237.0 410.2V438.4" stroke="#ff00ff" stroke-width="2"/><path d="M1217.5 410.2V442.4" stroke="#ff00ff" stroke-width="1"/><path d="M1271.5 439.4V488.7" stroke="#ff00ff" stroke-width="1"/><path d="M1241.5 439.4V496.7" stroke="#ff00ff" stroke-width="1"/><path d="M1213.5 455.5V483.6" stroke="#ff00ff" stroke-width="1"/><path d="M1186.5 455.5V483.6" stroke="#ff00ff" stroke-width="1"/><path d="M1199.5 441.4V455.5" stroke="#ff00ff" stroke-width="1"/><path d="M1181.5 410.2V460.5" stroke="#ff00ff" stroke-width="1"/><path d="M1161.5 409.2V438.4" stroke="#ff00ff" stroke-width="1"/><path d="M1136.5 405.2V438.4" stroke="#ff00ff" stroke-width="1"/><path d="M1158.5 439.4V496.7" stroke="#ff00ff" stroke-width="1"/><path d="M1127.5 439.4V488.7" stroke="#ff00ff" stroke-width="1"/><path d="M1276.1 420.5H1267.0" stroke="#ff9900" stroke-width="1"/><path d="M1257.9 429.5H1245.9" stroke="#ff9900" stroke-width="1"/><path d="M1267.0 455.5H1247.9" stroke="#ff9900" stroke-width="1"/><path d="M1288.1 456.5H1279.1" stroke="#ff9900" stroke-width="1"/><path d="M1234.8 445.5H1210.7" stroke="#ff9900" stroke-width="1"/><path d="M1234.8 465.5H1216.7" stroke="#ff9900" stroke-width="1"/><path d="M1209.7 464.5H1193.6" stroke="#ff9900" stroke-width="1"/><path d="M1183.5 466.5H1165.4" stroke="#ff9900" stroke-width="1"/><path d="M1152.3 457.5H1134.2" stroke="#ff9900" stroke-width="1"/><path d="M1156.7 427.5H1142.6" stroke="#ff9900" stroke-width="1"/><path d="M1220.5 450.4V464.5" stroke="#ff9900" stroke-width="1"/><path d="M1181.5 450.4V465.5" stroke="#ff9900" stroke-width="1"/><path d="M1267.5 438.4V448.4" stroke="#ff9900" stroke-width="1"/><path d="M1279.5 438.4V448.4" stroke="#ff9900" stroke-width="1"/><path d="M1164.5 430.3V446.4" stroke="#ff9900" stroke-width="1"/><path d="M1144.5 430.3V446.4" stroke="#ff9900" stroke-width="1"/><path d="M1134.5 430.3V446.4" stroke="#ff9900" stroke-width="1"/><path d="M1251.5 474.6V484.6" stroke="#ff9900" stroke-width="1"/><path d="M1205.5 477.6V488.7" stroke="#ff9900" stroke-width="1"/><path d="M1197.5 477.6V488.7" stroke="#ff9900" stroke-width="1"/><path d="M1138.5 476.6V488.7" stroke="#ff9900" stroke-width="1"/><path d="M1278.5 476.6V488.7" stroke="#ff9900" stroke-width="1"/><path d="M1220.5 476.6V484.6" stroke="#ff9900" stroke-width="1"/><path d="M1235.5 410.2V414.2" stroke="#ff9900" stroke-width="1"/><path d="M1141.5 410.2V416.2" stroke="#ff9900" stroke-width="1"/><path d="M1258.9 489.5H1252.9" stroke="#ff9900" stroke-width="1"/><path d="M1175.4 489.5H1169.4" stroke="#ff9900" stroke-width="1"/><path d="M1230.8 415.5H1220.7" stroke="#ff9900" stroke-width="1"/><path d="M1252.9 412.5H1246.9" stroke="#ff9900" stroke-width="1"/><path d="M1209.5 454.4V462.5" stroke="#ff9900" stroke-width="1"/><path d="M1191.5 416.5H1185.5" stroke="#ff9900" stroke-width="1"/><path d="M1132.2 415.5H1125.1" stroke="#ff9900" stroke-width="1"/><rect x="1261.6" y="404.1" width="5.6" height="2.0" fill="#ff0000"/><rect x="1267.0" y="408.7" width="2.0" height="5.0" fill="#ff0000"/><rect x="1268.0" y="418.4" width="6.0" height="1.6" fill="#ff0000"/><rect x="1263.0" y="420.8" width="2.8" height="2.8" fill="#ff0000"/><rect x="1251.9" y="415.2" width="6.0" height="2.8" fill="#ff0000"/><rect x="1246.3" y="412.2" width="4.4" height="2.0" fill="#ff0000"/><rect x="1241.6" y="409.6" width="2.4" height="4.4" fill="#ff0000"/><rect x="1235.6" y="413.2" width="3.2" height="6.0" fill="#ff0000"/><rect x="1234.8" y="409.8" width="2.0" height="2.8" fill="#ff0000"/><rect x="1223.9" y="417.2" width="4.8" height="2.0" fill="#ff0000"/><rect x="1217.9" y="421.9" width="3.6" height="2.8" fill="#ff0000"/><rect x="1211.7" y="415.8" width="4.0" height="1.6" fill="#ff0000"/><rect x="1217.3" y="410.0" width="1.6" height="4.4" fill="#ff0000"/><rect x="1251.7" y="427.1" width="5.6" height="2.4" fill="#ff0000"/><rect x="1243.9" y="420.1" width="2.0" height="5.0" fill="#ff0000"/><rect x="1239.0" y="424.9" width="3.6" height="3.6" fill="#ff0000"/><rect x="1228.8" y="426.7" width="6.0" height="2.4" fill="#ff0000"/><rect x="1219.7" y="426.7" width="4.0" height="2.4" fill="#ff0000"/><rect x="1235.8" y="429.3" width="2.8" height="4.0" fill="#ff0000"/><rect x="1265.8" y="431.3" width="1.6" height="8.0" fill="#ff0000"/><rect x="1278.5" y="439.9" width="2.0" height="7.0" fill="#ff0000"/><rect x="1217.7" y="433.9" width="2.0" height="4.8" fill="#ff0000"/><rect x="1216.5" y="442.8" width="4.4" height="2.4" fill="#ff0000"/><rect x="1198.6" y="442.2" width="6.0" height="2.4" fill="#ff0000"/><rect x="1197.6" y="446.4" width="2.8" height="6.0" fill="#ff0000"/><rect x="1206.0" y="450.6" width="2.4" height="3.6" fill="#ff0000"/><rect x="1179.9" y="440.4" width="2.4" height="6.0" fill="#ff0000"/><rect x="1182.3" y="434.1" width="2.4" height="5.2" fill="#ff0000"/><rect x="1179.7" y="410.2" width="1.6" height="4.8" fill="#ff0000"/><rect x="1164.2" y="409.6" width="2.4" height="4.4" fill="#ff0000"/><rect x="1185.5" y="415.2" width="4.0" height="2.0" fill="#ff0000"/><rect x="1171.8" y="415.6" width="5.2" height="2.0" fill="#ff0000"/><rect x="1179.3" y="420.8" width="3.6" height="3.6" fill="#ff0000"/><rect x="1160.2" y="421.0" width="4.4" height="3.2" fill="#ff0000"/><rect x="1135.6" y="421.4" width="4.4" height="3.6" fill="#ff0000"/><rect x="1174.6" y="427.3" width="4.4" height="2.0" fill="#ff0000"/><rect x="1146.3" y="426.7" width="8.0" height="2.0" fill="#ff0000"/><rect x="1136.0" y="405.4" width="5.2" height="3.6" fill="#ff0000"/><rect x="1140.0" y="409.6" width="2.4" height="4.4" fill="#ff0000"/><rect x="1143.3" y="412.8" width="6.0" height="2.0" fill="#ff0000"/><rect x="1126.4" y="414.8" width="5.6" height="2.0" fill="#ff0000"/><rect x="1163.8" y="435.4" width="2.0" height="9.1" fill="#ff0000"/><rect x="1144.1" y="435.4" width="2.4" height="9.1" fill="#ff0000"/><rect x="1134.2" y="436.7" width="2.0" height="7.2" fill="#ff0000"/><rect x="1269.8" y="457.9" width="3.2" height="5.2" fill="#ff0000"/><rect x="1240.2" y="457.9" width="2.8" height="5.2" fill="#ff0000"/><rect x="1256.3" y="454.4" width="5.2" height="2.0" fill="#ff0000"/><rect x="1280.1" y="455.5" width="6.0" height="2.0" fill="#ff0000"/><rect x="1218.3" y="455.5" width="2.8" height="5.2" fill="#ff0000"/><rect x="1223.7" y="463.3" width="7.2" height="2.4" fill="#ff0000"/><rect x="1212.9" y="465.7" width="3.6" height="2.8" fill="#ff0000"/><rect x="1211.9" y="467.5" width="1.6" height="4.0" fill="#ff0000"/><rect x="1207.2" y="455.9" width="2.0" height="6.0" fill="#ff0000"/><rect x="1199.6" y="463.5" width="6.0" height="2.0" fill="#ff0000"/><rect x="1193.6" y="455.5" width="2.0" height="5.2" fill="#ff0000"/><rect x="1185.1" y="465.9" width="2.0" height="5.2" fill="#ff0000"/><rect x="1180.5" y="455.1" width="2.0" height="6.0" fill="#ff0000"/><rect x="1173.0" y="463.3" width="4.8" height="2.4" fill="#ff0000"/><rect x="1157.7" y="458.1" width="3.2" height="4.8" fill="#ff0000"/><rect x="1126.4" y="458.1" width="3.6" height="4.8" fill="#ff0000"/><rect x="1139.2" y="456.3" width="8.0" height="1.6" fill="#ff0000"/><rect x="1275.4" y="477.2" width="2.4" height="6.0" fill="#ff0000"/><rect x="1272.2" y="482.8" width="3.6" height="3.6" fill="#ff0000"/><rect x="1250.1" y="477.0" width="2.4" height="5.2" fill="#ff0000"/><rect x="1245.7" y="483.4" width="3.2" height="4.4" fill="#ff0000"/><rect x="1254.3" y="488.5" width="3.2" height="2.4" fill="#ff0000"/><rect x="1238.0" y="488.0" width="3.6" height="5.2" fill="#ff0000"/><rect x="1227.4" y="491.5" width="4.8" height="1.6" fill="#ff0000"/><rect x="1236.6" y="477.0" width="1.6" height="5.2" fill="#ff0000"/><rect x="1218.3" y="477.4" width="2.0" height="5.2" fill="#ff0000"/><rect x="1203.0" y="482.2" width="2.0" height="4.0" fill="#ff0000"/><rect x="1195.2" y="482.2" width="2.8" height="4.0" fill="#ff0000"/><rect x="1195.2" y="477.8" width="1.6" height="3.6" fill="#ff0000"/><rect x="1182.5" y="477.4" width="2.0" height="5.2" fill="#ff0000"/><rect x="1162.2" y="477.0" width="1.6" height="6.0" fill="#ff0000"/><rect x="1163.0" y="483.4" width="2.8" height="4.4" fill="#ff0000"/><rect x="1171.0" y="488.5" width="2.8" height="2.4" fill="#ff0000"/><rect x="1156.5" y="489.1" width="2.8" height="5.2" fill="#ff0000"/><rect x="1144.9" y="491.5" width="4.8" height="1.6" fill="#ff0000"/><rect x="1131.0" y="477.0" width="2.4" height="5.2" fill="#ff0000"/><rect x="1127.6" y="482.6" width="3.2" height="4.0" fill="#ff0000"/><rect x="1137.2" y="478.0" width="1.6" height="5.2" fill="#ff0000"/><rect x="1197.6" y="397.5" width="4.0" height="2.0" fill="#ff0000"/><rect x="1240.0" y="488.7" width="1.6" height="8.0" fill="#ff0000"/><rect x="1156.5" y="488.7" width="1.6" height="8.0" fill="#ff0000"/></g></svg>
<div class="a" style="left:242px;top:740px;width:1150px;height:16px;background:#f0f0f0"></div>
<div class="a" style="left:242px;top:741px;width:18px;height:15px;background:#f0f0f0;border-top:1px solid #fff;border-left:1px solid #fff;border-right:1px solid #707070;border-bottom:1px solid #707070"></div>
<div class="a" style="left:260px;top:741px;width:18px;height:15px;background:#f0f0f0;border-top:1px solid #fff;border-left:1px solid #fff;border-right:1px solid #707070;border-bottom:1px solid #707070"></div>
<div class="a" style="left:278px;top:741px;width:18px;height:15px;background:#f0f0f0;border-top:1px solid #fff;border-left:1px solid #fff;border-right:1px solid #707070;border-bottom:1px solid #707070"></div>
<div class="a" style="left:296px;top:741px;width:18px;height:15px;background:#f0f0f0;border-top:1px solid #fff;border-left:1px solid #fff;border-right:1px solid #707070;border-bottom:1px solid #707070"></div>
<svg style="left:242px;top:741px" width="72" height="15"><path d="M5 3.5v8M6 7.5l5-4v8z" fill="#000" stroke="#000" stroke-width="1.2" stroke-linejoin="miter"/><path d="M24 7.5l5-4v8z" fill="#000"/><path d="M47 7.5l-5-4v8z" fill="#000"/><path d="M66.5 3.5v8M65 7.5l-5-4v8z" fill="#000" stroke="#000" stroke-width="1.2"/></svg>
<svg style="left:314px;top:740px" width="90" height="16"><path d="M3 0 L8.5 15 L36 15 L39 0Z" fill="#000"/><path d="M39 0 L44 15 L79 15 L84 1" fill="none" stroke="#000" stroke-width="1"/><path d="M39 0 L37 8" stroke="#000"/></svg>
<div class="a" style="left:325px;top:742px;color:#fff;font-size:12px">模型</div>
<div class="a" style="left:360px;top:742px;font-size:12px">布局1</div>
<div class="a" style="left:440px;top:741px;width:90px;height:15px;border:1px solid #808080;border-bottom:none;border-right-color:#d0d0d0;border-radius:2px 0 0 0;background:linear-gradient(180deg,#f6f6f6 0,#ececec 50%,#dcdcdc 100%);font-size:12px;line-height:16px;padding-left:3px">首层<div class="arr" style="left:77px;top:7px"></div></div>
<div class="a" style="left:531px;top:742px;font-size:12px;white-space:nowrap">层高<span class="m">(2.9m):</span>层高范围<span class="m">(0~2.9);</span>轴网已锁</div>
<div class="a" style="left:1007px;top:741px;width:385px;height:15px;background:#f6f6f6"></div>
<div class="a" style="left:1002px;top:741px;width:5px;height:14px;border:1px solid #9a9a9a;border-radius:1px;background:#fff"></div>
<svg style="left:1012px;top:743px" width="6" height="10"><path d="M5 1 L1 5 L5 9Z" fill="#333"/></svg>
<svg style="left:1384px;top:743px" width="6" height="10"><path d="M1 1 L5 5 L1 9Z" fill="#333"/></svg>
<div class="a" style="left:1138px;top:741px;width:15px;height:14px;border:1px solid #8e8e8e;border-radius:2px;background:linear-gradient(180deg,#f8f8f8 0,#e6e6e6 50%,#d4d4d4 100%)"></div>
<div class="a" style="left:0;top:756px;width:1392px;height:13px;background:#f0f0f0"></div>
<div class="a" style="left:0;top:757px;width:1392px;height:4px;background:linear-gradient(180deg,#fff 0,#fff 60%,#e8e8e8 100%)"></div>
<div class="a" style="left:0;top:761px;width:1392px;height:2px;background:linear-gradient(180deg,#b0b0b0,#808080)"></div>
<div class="a" style="left:0;top:763px;width:1392px;height:4px;background:#f2f2f2"></div>
<div class="a" style="left:0;top:767px;width:1392px;height:2px;background:linear-gradient(180deg,#a0a0a0,#6a6a6a)"></div>
<div class="a" style="left:0;top:769px;width:1392px;height:15px;background:#fff"></div>
<div class="a" style="left:-7px;top:771px;font-size:12px;letter-spacing:2px">命令:</div>
</body></html>
